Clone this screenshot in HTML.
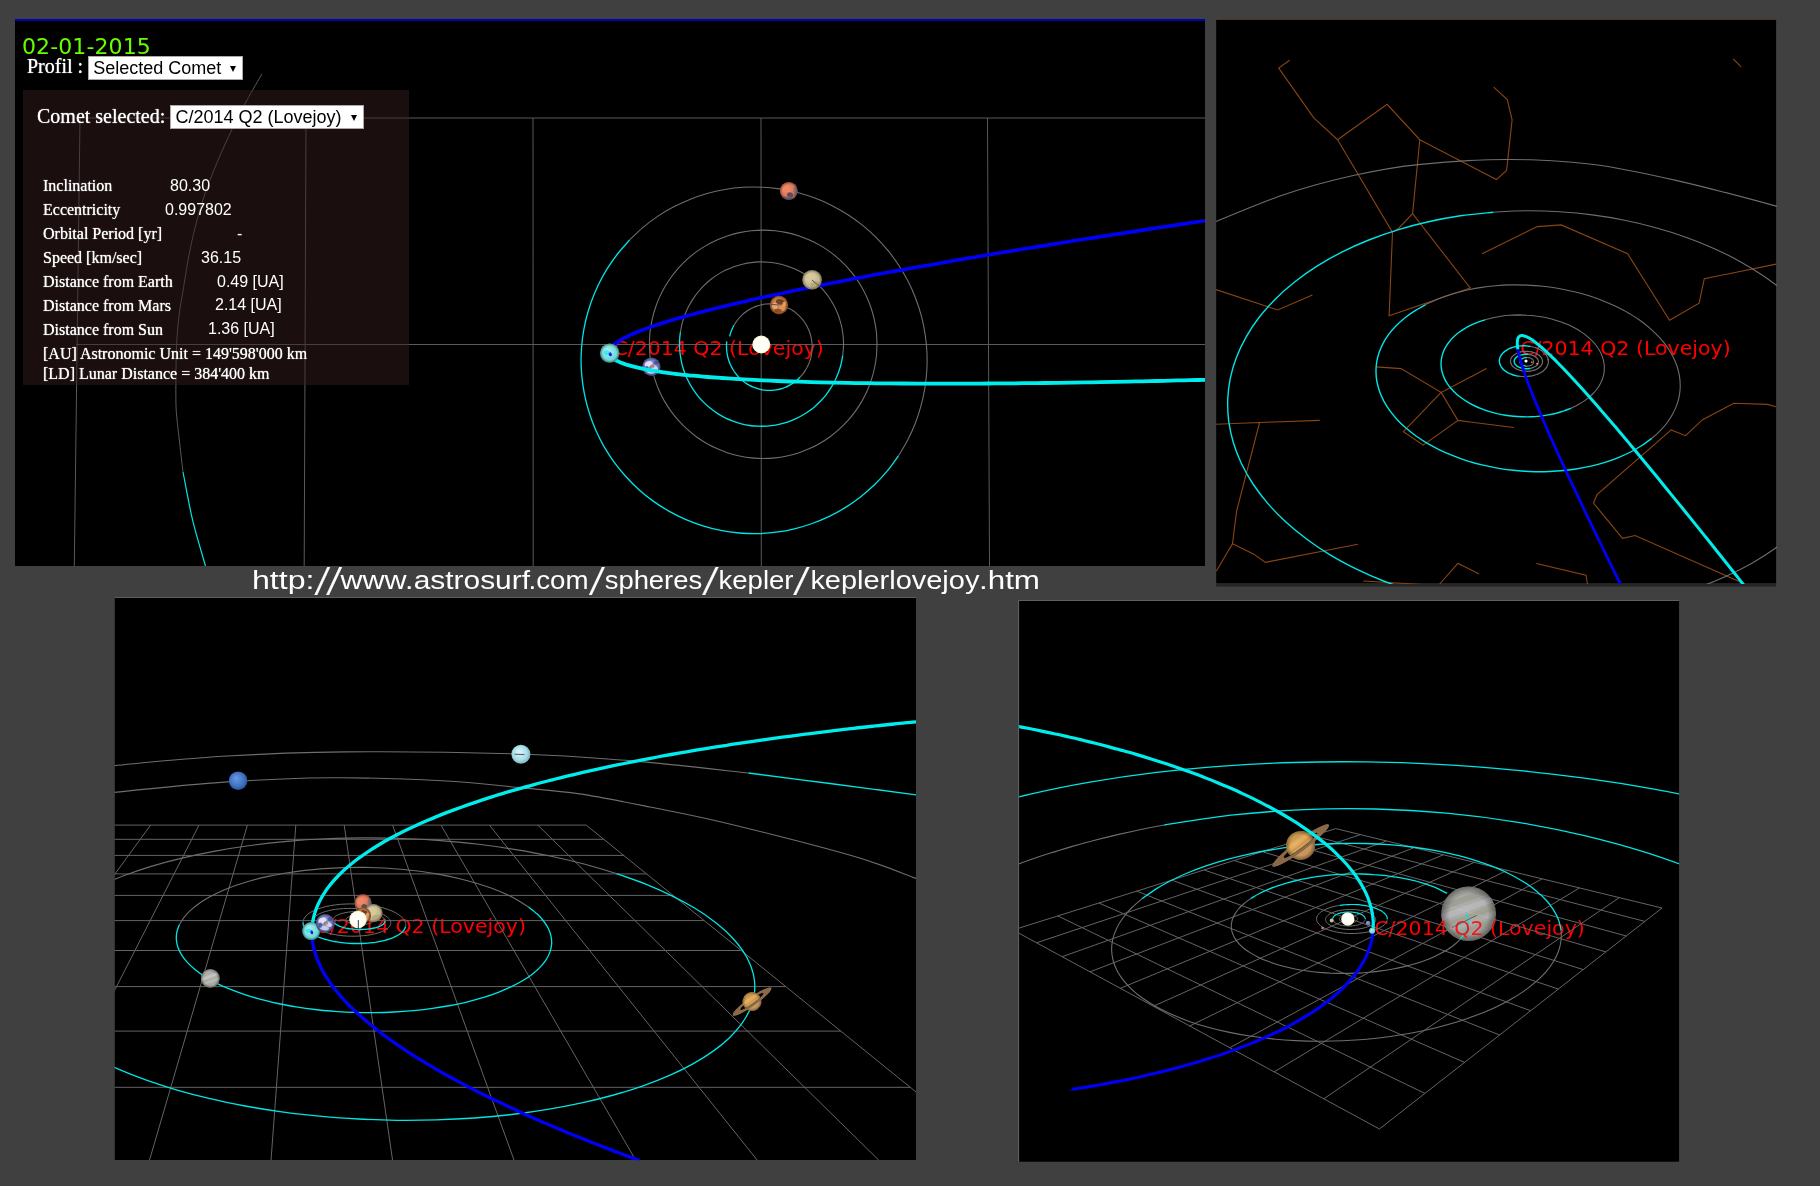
<!DOCTYPE html>
<html lang="en"><head><meta charset="utf-8"><title>Kepler - C/2014 Q2 (Lovejoy)</title>
<style>
html,body{margin:0;padding:0;background:#404040;}
body{width:1820px;height:1186px;position:relative;overflow:hidden;}
svg{position:absolute;left:0;top:0;will-change:transform;}
.t{position:absolute;white-space:nowrap;will-change:transform;}
.info{position:absolute;left:23px;top:90.3px;width:385.5px;height:295px;background:rgba(58,29,29,0.47);}
.sel{position:absolute;will-change:transform;background:#fff;border:1px solid #a9a9a9;box-sizing:border-box;}
.sel span{position:absolute;top:0;line-height:22px;font-family:'Liberation Sans',Arial,sans-serif;font-size:18px;color:#000;white-space:nowrap;}
.sel i{position:absolute;top:8.5px;width:0;height:0;border-left:3px solid transparent;border-right:3px solid transparent;border-top:6px solid #000;}
</style></head><body>
<svg width="1820" height="1186" viewBox="0 0 1820 1186">
<defs><radialGradient id="gShade" cx="0.5" cy="0.5" r="0.5"><stop offset="0.7" stop-color="#000" stop-opacity="0"/><stop offset="1" stop-color="#000" stop-opacity="0.35"/></radialGradient><radialGradient id="gSun" cx="0.5" cy="0.5" r="0.5" fx="0.5" fy="0.5"><stop offset="0" stop-color="#ffffff"/><stop offset="0.8" stop-color="#fffff2"/><stop offset="1" stop-color="#f0eecb"/></radialGradient><radialGradient id="gMerc" cx="0.5" cy="0.5" r="0.62" fx="0.38" fy="0.35"><stop offset="0" stop-color="#d89058"/><stop offset="0.7" stop-color="#c07038"/><stop offset="1" stop-color="#8a4820"/></radialGradient><radialGradient id="gVen" cx="0.5" cy="0.5" r="0.62" fx="0.38" fy="0.35"><stop offset="0" stop-color="#d6caa0"/><stop offset="0.7" stop-color="#c4b88c"/><stop offset="1" stop-color="#9a8e68"/></radialGradient><radialGradient id="gMars" cx="0.5" cy="0.5" r="0.62" fx="0.38" fy="0.35"><stop offset="0" stop-color="#ec8a66"/><stop offset="0.7" stop-color="#dc7456"/><stop offset="1" stop-color="#b85a44"/></radialGradient><radialGradient id="gEarth" cx="0.5" cy="0.5" r="0.62" fx="0.38" fy="0.35"><stop offset="0" stop-color="#9aa0d8"/><stop offset="0.7" stop-color="#6a72b8"/><stop offset="1" stop-color="#3a3e80"/></radialGradient><radialGradient id="gComet" cx="0.5" cy="0.5" r="0.62" fx="0.38" fy="0.35"><stop offset="0" stop-color="#b0f0f0"/><stop offset="0.7" stop-color="#6ad8d8"/><stop offset="1" stop-color="#3aa8a8"/></radialGradient><radialGradient id="gJup" cx="0.5" cy="0.5" r="0.62" fx="0.38" fy="0.35"><stop offset="0" stop-color="#bebeba"/><stop offset="0.7" stop-color="#b0b0ac"/><stop offset="1" stop-color="#8e8e8c"/></radialGradient><radialGradient id="gSat" cx="0.5" cy="0.5" r="0.62" fx="0.38" fy="0.35"><stop offset="0" stop-color="#e4b060"/><stop offset="0.7" stop-color="#d8a050"/><stop offset="1" stop-color="#b88444"/></radialGradient><radialGradient id="gUra" cx="0.5" cy="0.5" r="0.62" fx="0.38" fy="0.35"><stop offset="0" stop-color="#e0f8fc"/><stop offset="0.6" stop-color="#a8dce8"/><stop offset="1" stop-color="#5a98a8"/></radialGradient><radialGradient id="gNep" cx="0.5" cy="0.5" r="0.62" fx="0.38" fy="0.35"><stop offset="0" stop-color="#6a9ae0"/><stop offset="0.6" stop-color="#3f73c4"/><stop offset="1" stop-color="#20407a"/></radialGradient></defs>
<clipPath id="c1"><rect x="15" y="19" width="1190" height="547"/></clipPath>
<rect x="15" y="19" width="1190" height="547" fill="#000"/>
<rect x="15" y="19" width="1190" height="2" fill="#0000b4"/>
<g clip-path="url(#c1)">
<text x="613.4" y="354.7" textLength="210.5" lengthAdjust="spacingAndGlyphs" font-family="'DejaVu Sans', Verdana, sans-serif" font-size="19.8" fill="#ff0000">C/2014 Q2 (Lovejoy)</text>
<path d="M79,118 L1205,118 M76.5,344.5 L1205,344.5 M80,118 L74.3,566 M306,118 L304.2,566 M533,118 L533.2,566 M761,118 L761.3,566 M987.5,118 L989.5,566" fill="none" stroke="#5a5a5a" stroke-width="1" />
<path d="M262,74 C259.5,78.3 251.9,91 247,100 C242.1,109 237.8,117.3 232.6,128.1 C227.4,138.9 221.1,152.7 216,165 C210.9,177.3 206.4,188.9 202.2,202.2 C198,215.5 194.1,230.9 191,245 C187.9,259.1 185.8,274 183.7,286.5 C181.6,299 179.7,308.8 178.5,320 C177.3,331.2 176.7,340.6 176.3,353.9 C175.9,367.2 175.8,388.5 175.9,399.7 C176.1,410.9 176,408.8 177.2,420.9 C178.4,432.9 182,463.5 183,472" fill="none" stroke="#5a5a5a" stroke-width="1" />
<path d="M183,472 C184.6,479.9 188.8,504 192.5,519.7 C196.2,535.4 202.8,556.3 205.5,566 C208.2,575.7 208.4,576 209,578" fill="none" stroke="#00e5e5" stroke-width="1.2" />
<path d="M629.7,239.9 C631.9,237.8 638.4,231.4 643,227.4 C647.7,223.5 652.6,219.8 657.6,216.4 C662.7,213 667.9,209.9 673.3,207.1 C678.7,204.2 684.2,201.6 689.9,199.4 C695.5,197.1 701.3,195.1 707.2,193.5 C713,191.8 719,190.5 725,189.5 C731,188.4 737.1,187.7 743.2,187.3 C749.2,187 755.4,186.9 761.4,187.2 C767.5,187.4 773.6,188 779.6,188.9 C785.6,189.8 791.6,191 797.5,192.5 C803.4,194.1 809.2,195.9 814.9,198.1 C820.6,200.2 826.2,202.7 831.7,205.4 C837.1,208.1 842.4,211.2 847.6,214.5 C852.7,217.8 857.6,221.3 862.4,225.1 C867.1,229 871.7,233 876,237.3 C880.3,241.6 884.4,246.2 888.3,250.9 C892.1,255.6 895.7,260.6 899,265.7 C902.4,270.8 905.4,276.1 908.2,281.5 C911,287 913.5,292.6 915.6,298.2 C917.8,303.9 919.7,309.8 921.3,315.7 C922.8,321.5 924.1,327.5 925,333.6 C926,339.6 926.6,345.7 926.9,351.8 C927.2,357.9 927.2,364 926.8,370.1 C926.5,376.2 925.8,382.3 924.8,388.3 C923.9,394.3 922.5,400.3 920.9,406.1 C919.3,412 917.4,417.8 915.2,423.5 C913,429.2 910.4,434.8 907.6,440.2 C904.8,445.6 899.9,453.3 898.4,456" fill="none" stroke="#6e6e6e" stroke-width="1.1" />
<path d="M898.4,456 C896.5,458.4 891.3,466.1 887.3,470.9 C883.4,475.6 879.2,480.2 874.7,484.5 C870.3,488.8 865.6,492.9 860.8,496.7 C855.9,500.6 850.8,504.1 845.6,507.4 C840.3,510.7 834.9,513.7 829.3,516.4 C823.8,519 818,521.5 812.2,523.5 C806.4,525.6 800.4,527.4 794.4,528.8 C788.4,530.3 782.3,531.4 776.2,532.2 C770.1,533 763.9,533.4 757.7,533.6 C751.5,533.7 745.3,533.5 739.2,533 C733,532.4 726.9,531.6 720.8,530.4 C714.7,529.2 708.7,527.6 702.8,525.8 C696.9,524 691.1,521.8 685.4,519.4 C679.8,516.9 674.2,514.1 668.8,511.1 C663.5,508 658.2,504.7 653.2,501.1 C648.2,497.5 643.3,493.6 638.7,489.4 C634.1,485.3 629.7,480.9 625.6,476.3 C621.5,471.7 617.6,466.9 613.9,461.9 C610.3,456.9 607,451.6 603.9,446.3 C600.8,440.9 598,435.3 595.6,429.7 C593.1,424 590.9,418.2 589.1,412.3 C587.2,406.4 585.7,400.3 584.5,394.3 C583.2,388.2 582.4,382 581.8,375.9 C581.2,369.7 581,363.5 581.1,357.3 C581.2,351.1 581.7,344.9 582.4,338.8 C583.2,332.7 584.3,326.5 585.7,320.5 C587.1,314.5 588.9,308.5 590.9,302.7 C593,296.8 595.4,291.1 598,285.5 C600.7,279.9 603.7,274.5 606.9,269.2 C610.2,264 613.7,258.8 617.5,254 C621.3,249.1 627.6,242.3 629.7,239.9" fill="none" stroke="#00e5e5" stroke-width="1.3" />
<path d="M877,344.3 C876.9,346.3 876.8,352.3 876.4,356.2 C876,360.2 875.3,364.2 874.5,368 C873.7,371.9 872.7,375.8 871.4,379.6 C870.2,383.4 868.8,387.1 867.2,390.7 C865.5,394.4 863.7,398 861.8,401.4 C859.8,404.8 857.6,408.2 855.3,411.4 C852.9,414.6 850.4,417.8 847.8,420.7 C845.1,423.7 842.3,426.5 839.3,429.2 C836.4,431.8 833.3,434.4 830.1,436.7 C826.9,439 823.5,441.2 820.1,443.2 C816.7,445.2 813.1,447 809.5,448.6 C805.9,450.2 802.1,451.7 798.4,452.9 C794.6,454.1 790.7,455.2 786.9,456 C783,456.8 779,457.5 775.1,457.9 C771.2,458.3 767.2,458.5 763.2,458.5 C759.2,458.5 755.2,458.3 751.3,457.9 C747.4,457.5 743.4,456.8 739.5,456 C735.7,455.2 731.8,454.1 728,452.9 C724.3,451.7 720.5,450.2 716.9,448.6 C713.3,447 709.7,445.2 706.3,443.2 C702.9,441.2 699.5,439 696.3,436.7 C693.1,434.4 690,431.8 687.1,429.2 C684.1,426.5 681.3,423.7 678.6,420.7 C676,417.8 673.5,414.6 671.1,411.4 C668.8,408.2 666.6,404.8 664.6,401.4 C662.7,398 660.9,394.4 659.2,390.7 C657.6,387.1 656.2,383.4 655,379.6 C653.7,375.8 652.7,371.9 651.9,368 C651.1,364.2 650.4,360.2 650,356.2 C649.6,352.3 649.4,348.3 649.4,344.3 C649.4,340.3 649.6,336.3 650,332.4 C650.4,328.4 651.1,324.4 651.9,320.6 C652.7,316.7 653.7,312.8 655,309 C656.2,305.2 657.6,301.5 659.2,297.9 C660.9,294.2 662.7,290.6 664.6,287.2 C666.6,283.8 668.8,280.4 671.1,277.2 C673.5,274 676,270.8 678.6,267.9 C681.3,264.9 684.1,262.1 687.1,259.4 C690,256.8 693.1,254.2 696.3,251.9 C699.5,249.6 702.9,247.4 706.3,245.4 C709.7,243.4 713.3,241.6 716.9,240 C720.5,238.4 724.3,236.9 728,235.7 C731.8,234.5 735.7,233.4 739.5,232.6 C743.4,231.8 747.4,231.1 751.3,230.7 C755.2,230.3 759.2,230.1 763.2,230.1 C767.2,230.1 771.2,230.3 775.1,230.7 C779,231.1 783,231.8 786.9,232.6 C790.7,233.4 794.6,234.5 798.4,235.7 C802.1,236.9 805.9,238.4 809.5,240 C813.1,241.6 816.7,243.4 820.1,245.4 C823.5,247.4 826.9,249.6 830.1,251.9 C833.3,254.2 836.4,256.8 839.3,259.4 C842.3,262.1 845.1,264.9 847.8,267.9 C850.4,270.8 852.9,274 855.3,277.2 C857.6,280.4 859.8,283.8 861.8,287.2 C863.7,290.6 865.5,294.2 867.2,297.9 C868.8,301.5 870.2,305.2 871.4,309 C872.7,312.8 873.7,316.7 874.5,320.6 C875.3,324.4 876,328.4 876.4,332.4 C876.8,336.3 876.9,342.3 877,344.3" fill="none" stroke="#6e6e6e" stroke-width="1.1" />
<path d="M680.4,332.1 C680.7,330.6 681.4,326.3 682.1,323.4 C682.9,320.5 683.8,317.7 684.8,314.9 C685.9,312.2 687.1,309.4 688.4,306.8 C689.8,304.2 691.3,301.6 692.9,299.1 C694.5,296.6 696.2,294.2 698.1,292 C700,289.7 702,287.5 704.1,285.4 C706.2,283.3 708.4,281.4 710.7,279.5 C713.1,277.7 715.5,276 718,274.4 C720.5,272.9 723.1,271.4 725.7,270.1 C728.4,268.8 731.1,267.7 733.9,266.7 C736.7,265.7 739.5,264.9 742.4,264.2 C745.3,263.5 748.2,262.9 751.1,262.6 C754,262.2 757,262 759.9,261.9 C762.9,261.9 765.9,262 768.8,262.2 C771.7,262.5 774.7,262.9 777.6,263.5 C780.5,264.1 783.3,264.8 786.1,265.7 C789,266.6 791.7,267.6 794.4,268.8 C797.1,270 799.8,271.4 802.3,272.8 C804.9,274.3 807.4,275.9 809.8,277.7 C812.2,279.4 814.5,281.3 816.6,283.3 C818.8,285.3 820.9,287.4 822.9,289.6 C824.8,291.8 826.7,294.1 828.4,296.5 C830.1,299 831.7,301.5 833.1,304 C834.5,306.6 835.9,309.3 837,312 C838.2,314.7 839.2,317.5 840,320.4 C840.9,323.2 841.6,326.1 842.1,329 C842.6,331.9 843,334.9 843.3,337.8 C843.5,340.8 843.6,343.7 843.5,346.7 C843.4,349.6 842.8,354.1 842.7,355.5" fill="none" stroke="#6e6e6e" stroke-width="1.1" />
<path d="M842.7,355.5 C842.4,357 841.8,361.2 841.1,364 C840.4,366.8 839.5,369.6 838.5,372.3 C837.6,374.9 836.4,377.6 835.2,380.2 C833.9,382.8 832.5,385.3 831,387.7 C829.5,390.2 827.8,392.5 826.1,394.8 C824.3,397 822.4,399.2 820.4,401.3 C818.4,403.3 816.3,405.3 814.1,407.2 C811.9,409 809.6,410.7 807.2,412.3 C804.9,413.9 802.4,415.4 799.8,416.8 C797.3,418.1 794.7,419.3 792,420.4 C789.4,421.5 786.7,422.4 783.9,423.2 C781.1,424 778.3,424.6 775.5,425.1 C772.7,425.6 769.8,425.9 767,426.1 C764.1,426.3 761.2,426.3 758.4,426.2 C755.5,426.1 752.6,425.9 749.8,425.5 C747,425.1 744.1,424.5 741.4,423.8 C738.6,423.1 735.8,422.2 733.1,421.2 C730.5,420.2 727.8,419.1 725.2,417.8 C722.7,416.6 720.2,415.1 717.7,413.6 C715.3,412.1 713,410.4 710.7,408.6 C708.5,406.9 706.3,405 704.3,402.9 C702.2,400.9 700.2,398.8 698.4,396.6 C696.6,394.4 694.9,392.1 693.3,389.7 C691.7,387.3 690.2,384.8 688.9,382.3 C687.6,379.7 686.4,377.1 685.3,374.4 C684.2,371.8 683.3,369 682.5,366.3 C681.8,363.5 681.1,360.7 680.7,357.9 C680.2,355 679.8,352.2 679.7,349.3 C679.5,346.4 679.5,343.5 679.6,340.7 C679.7,337.8 680.2,333.5 680.4,332.1" fill="none" stroke="#00e5e5" stroke-width="1.3" />
<path d="M799.9,377.3 C800.4,376.7 802,375.1 802.9,373.9 C803.8,372.7 804.7,371.4 805.5,370.1 C806.3,368.9 807.1,367.5 807.7,366.1 C808.4,364.8 809,363.4 809.5,361.9 C810,360.5 810.5,359 810.9,357.5 C811.2,356.1 811.5,354.5 811.7,353 C811.9,351.5 812.1,350 812.1,348.5 C812.2,346.9 812.2,345.4 812.1,343.9 C811.9,342.4 811.8,340.8 811.5,339.3 C811.2,337.8 810.9,336.3 810.5,334.9 C810.1,333.4 809.6,332 809,330.5 C808.4,329.1 807.8,327.7 807.1,326.4 C806.4,325.1 805.6,323.8 804.8,322.5 C803.9,321.2 803,320 802,318.9 C801.1,317.7 800,316.6 799,315.6 C797.9,314.5 796.7,313.5 795.6,312.6 C794.4,311.7 793.1,310.8 791.9,310 C790.6,309.3 789.3,308.5 787.9,307.9 C786.6,307.2 785.2,306.7 783.8,306.2 C782.4,305.7 781,305.3 779.5,304.9 C778.1,304.6 776.6,304.3 775.1,304.1 C773.7,304 772.2,303.9 770.7,303.9 C769.2,303.8 767.7,303.9 766.2,304 C764.8,304.2 763.3,304.4 761.8,304.7 C760.4,305 758.9,305.4 757.5,305.9 C756.1,306.3 754.7,306.8 753.4,307.5 C752,308.1 750.7,308.8 749.4,309.5 C748.1,310.3 746.9,311.1 745.7,312 C744.5,312.9 743.3,313.8 742.2,314.8 C741.1,315.8 740.1,316.9 739.1,318 C738.1,319.2 737.2,320.3 736.3,321.6 C735.5,322.8 734.3,324.7 733.9,325.4" fill="none" stroke="#6e6e6e" stroke-width="1.1" />
<path d="M733.9,325.4 C733.8,325.6 733.4,326.2 733.2,326.7 C733,327.1 732.8,327.6 732.6,328 C732.3,328.5 732.1,328.9 732,329.4 C731.8,329.8 731.6,330.3 731.4,330.7 C731.2,331.2 731,331.7 730.9,332.1 C730.7,332.6 730.6,333.1 730.4,333.5 C730.3,334 730.1,334.5 730,335 C729.9,335.4 729.7,336.2 729.6,336.4" fill="none" stroke="#00e5e5" stroke-width="1.3" />
<path d="M799.9,377.3 C799.4,377.8 797.7,379.5 796.6,380.5 C795.4,381.5 794.2,382.4 792.9,383.3 C791.6,384.1 790.3,384.9 788.9,385.6 C787.6,386.3 786.2,387 784.8,387.5 C783.3,388.1 781.9,388.6 780.4,389 C778.9,389.4 777.4,389.7 775.9,389.9 C774.4,390.2 772.9,390.3 771.3,390.4 C769.8,390.4 768.3,390.4 766.7,390.3 C765.2,390.2 763.7,390 762.2,389.8 C760.6,389.5 759.1,389.1 757.7,388.7 C756.2,388.3 754.7,387.8 753.3,387.2 C751.9,386.6 750.5,385.9 749.1,385.1 C747.8,384.4 746.4,383.6 745.2,382.7 C743.9,381.8 742.7,380.8 741.5,379.8 C740.3,378.7 739.2,377.6 738.1,376.5 C737.1,375.3 736.1,374.1 735.2,372.8 C734.2,371.6 733.4,370.2 732.6,368.9 C731.8,367.5 731.1,366.1 730.4,364.6 C729.8,363.2 729.2,361.7 728.7,360.2 C728.2,358.7 727.8,357.1 727.5,355.6 C727.1,354 726.9,352.4 726.7,350.8 C726.6,349.3 726.5,347.7 726.5,346.1 C726.5,344.5 726.7,342.1 726.8,341.3" fill="none" stroke="#00e5e5" stroke-width="1.3" />
<g transform="translate(651.4,366.8)"><clipPath id="pc1"><circle r="9.2"/></clipPath><circle r="9.2" fill="url(#gEarth)"/><g clip-path="url(#pc1)"><ellipse cx="-2.8" cy="-2.8" rx="4.1" ry="2.8" transform="rotate(-20 -2.8 -2.8)" fill="#f4f4ff" opacity="0.8"/><ellipse cx="3.2" cy="0.9" rx="3.7" ry="2.3" transform="rotate(30 3.2 0.9)" fill="#f0f0ff" opacity="0.75"/><ellipse cx="-0.9" cy="4.6" rx="4.6" ry="2.3" transform="rotate(10 -0.9 4.6)" fill="#e8e8f8" opacity="0.7"/><ellipse cx="0.9" cy="-0.5" rx="2.3" ry="1.8" transform="rotate(0 0.9 -0.5)" fill="#8a5a3a" opacity="0.6"/><ellipse cx="-4.6" cy="1.8" rx="1.8" ry="2.8" transform="rotate(0 -4.6 1.8)" fill="#2a3a8a" opacity="0.6"/><ellipse cx="4.6" cy="-4.1" rx="2.3" ry="1.8" transform="rotate(0 4.6 -4.1)" fill="#2a3a8a" opacity="0.6"/></g><circle r="9.2" fill="url(#gShade)"/></g>
<path d="M609.5,352.4 C609.5,352.5 609.5,352.7 609.5,352.9 C609.6,353.1 609.6,353.2 609.6,353.4 C609.7,353.6 609.7,353.7 609.7,353.9 C609.8,354.1 609.9,354.2 609.9,354.4 C610,354.6 610.1,354.8 610.2,355 C610.3,355.1 610.4,355.3 610.5,355.5 C610.6,355.7 610.8,355.9 610.9,356.2 C611.1,356.4 611.3,356.6 611.5,356.8 C611.7,357.1 612,357.3 612.3,357.6 C612.6,357.9 612.9,358.2 613.3,358.5 C613.7,358.8 614.2,359.2 614.8,359.6 C615.4,359.9 616.1,360.4 617,360.8 C618,361.3 618.9,361.8 620.5,362.5 C622.1,363.1 623.5,363.8 626.4,364.7 C629.3,365.5 633.7,366.8 637.9,367.7 C642.1,368.7 647,369.7 651.6,370.5 C656.2,371.3 660.9,371.9 665.5,372.6 C670.1,373.2 674.8,373.8 679.4,374.3 C684,374.8 688.7,375.3 693.3,375.7 C698,376.2 702.6,376.6 707.3,377 C711.9,377.3 716.6,377.7 721.3,378 C725.9,378.3 730.6,378.6 735.2,378.9 C739.9,379.2 744.6,379.4 749.2,379.7 C753.9,379.9 758.6,380.2 763.2,380.4 C767.9,380.6 772.6,380.8 777.3,381 C781.9,381.1 786.6,381.3 791.3,381.5 C796,381.6 800.6,381.8 805.3,381.9 C810,382.1 814.7,382.2 819.4,382.3 C824,382.4 828.7,382.5 833.4,382.6 C838.1,382.7 842.8,382.8 847.5,382.9 C852.2,383 856.8,383.1 861.5,383.1 C866.2,383.2 870.9,383.2 875.6,383.3 C880.3,383.4 885,383.4 889.6,383.4 C894.3,383.5 899,383.5 903.7,383.5 C908.3,383.6 913,383.6 917.7,383.6 C922.4,383.6 927,383.6 931.7,383.6 C936.4,383.7 941.1,383.7 945.8,383.7 C950.4,383.6 955.1,383.6 959.8,383.6 C964.4,383.6 969.1,383.6 973.8,383.6 C978.5,383.6 983.1,383.5 987.8,383.5 C992.5,383.5 997.2,383.4 1001.9,383.4 C1006.6,383.4 1011.2,383.3 1015.9,383.3 C1020.6,383.2 1025.3,383.2 1030,383.1 C1034.7,383.1 1039.3,383 1044,383 C1048.7,382.9 1053.4,382.8 1058.1,382.8 C1062.7,382.7 1067.4,382.6 1072.1,382.6 C1076.8,382.5 1081.5,382.4 1086.2,382.3 C1090.8,382.3 1095.5,382.2 1100.2,382.1 C1104.9,382 1109.6,381.9 1114.2,381.8 C1118.9,381.7 1123.6,381.7 1128.2,381.6 C1132.9,381.5 1137.6,381.4 1142.3,381.3 C1147,381.2 1151.6,381.1 1156.3,381 C1161,380.9 1165.7,380.8 1170.4,380.6 C1175.1,380.5 1179.7,380.4 1184.4,380.3 C1189.1,380.2 1194.3,380.1 1198.5,380 C1202.6,379.9 1207.6,379.7 1209.4,379.7" fill="none" stroke="#00eded" stroke-width="3.8" />
<path d="M1210.2,220 C1207.8,220.3 1200.9,221.3 1196.3,222 C1191.6,222.7 1187,223.4 1182.3,224.1 C1177.7,224.8 1173.1,225.5 1168.4,226.2 C1163.8,226.9 1159.2,227.6 1154.6,228.3 C1150,229 1145.3,229.7 1140.7,230.4 C1136.1,231.1 1131.5,231.9 1126.8,232.6 C1122.2,233.3 1117.6,234 1112.9,234.7 C1108.3,235.4 1103.7,236.2 1099,236.9 C1094.4,237.6 1089.8,238.3 1085.2,239.1 C1080.6,239.8 1075.9,240.5 1071.3,241.3 C1066.7,242 1062.1,242.7 1057.5,243.5 C1052.9,244.2 1048.2,245 1043.6,245.7 C1039,246.5 1034.4,247.2 1029.8,248 C1025.2,248.7 1020.6,249.5 1016,250.2 C1011.3,251 1006.7,251.8 1002.1,252.5 C997.5,253.3 992.9,254.1 988.3,254.8 C983.7,255.6 979,256.4 974.4,257.2 C969.8,258 965.2,258.8 960.6,259.6 C956,260.3 951.3,261.1 946.7,261.9 C942.1,262.7 937.5,263.6 932.9,264.4 C928.3,265.2 923.7,266 919.1,266.8 C914.5,267.6 909.9,268.4 905.3,269.3 C900.7,270.1 896,270.9 891.4,271.8 C886.8,272.6 882.2,273.5 877.6,274.3 C873,275.2 868.4,276 863.8,276.9 C859.2,277.8 854.6,278.6 850.1,279.5 C845.5,280.4 840.9,281.3 836.3,282.2 C831.7,283.1 827.1,284 822.5,284.9 C817.9,285.8 813.3,286.7 808.7,287.7 C804.1,288.6 799.6,289.5 795,290.5 C790.4,291.4 785.8,292.4 781.2,293.4 C776.7,294.3 772.1,295.3 767.5,296.3 C762.9,297.3 758.4,298.3 753.8,299.3 C749.3,300.4 744.7,301.4 740.2,302.5 C735.6,303.5 731,304.6 726.5,305.7 C721.9,306.8 717.4,307.9 712.9,309 C708.3,310.2 703.8,311.3 699.3,312.5 C694.8,313.7 690.3,314.9 685.8,316.2 C681.3,317.4 676.8,318.7 672.3,320 C667.8,321.4 663.3,322.8 658.9,324.2 C654.5,325.7 650,327.1 645.7,328.8 C641.3,330.4 636.4,332.3 632.6,334 C628.9,335.6 625.5,337.3 623,338.6 C620.6,339.9 619.3,340.8 618,341.6 C616.7,342.5 615.9,343.1 615.1,343.7 C614.3,344.3 613.8,344.8 613.3,345.3 C612.8,345.8 612.4,346.2 612.1,346.6 C611.7,346.9 611.5,347.3 611.3,347.6 C611,347.9 610.8,348.2 610.7,348.5 C610.5,348.7 610.4,349 610.3,349.2 C610.1,349.5 610,349.7 610,349.9 C609.9,350.1 609.8,350.3 609.8,350.5 C609.7,350.7 609.6,350.9 609.6,351.1 C609.6,351.3 609.5,351.4 609.5,351.6 C609.5,351.8 609.5,352 609.5,352.1 C609.5,352.3 609.5,352.4 609.5,352.4" fill="none" stroke="#0000f6" stroke-width="3.6" />
</g>
<clipPath id="c2"><rect x="1216.2" y="19.4" width="559.9" height="564.1"/></clipPath>
<rect x="1216.2" y="19.4" width="559.9" height="564.1" fill="#000"/>
<rect x="1216.2" y="19" width="559.9" height="1" fill="#5a3418"/>
<rect x="1216.2" y="583.4" width="559.9" height="3.2" fill="#262626"/>
<g clip-path="url(#c2)">
<text x="1520.2" y="354.6" textLength="210.5" lengthAdjust="spacingAndGlyphs" font-family="'DejaVu Sans', Verdana, sans-serif" font-size="19.8" fill="#ff0000">C/2014 Q2 (Lovejoy)</text>
<path d="M1289.6,60.3 L1278.7,68.1 L1313.8,117.9 L1337.6,139.7 L1387.1,104.3 L1419.8,139.7 L1496.4,179.6 L1506.6,170.4 L1512.1,119.9 L1507.3,99.5 L1493.7,87.2 M1337.6,139.7 L1392.5,232.4 L1389.1,315.8 L1470.2,287.9 L1412.6,213.6 L1419.8,139.7 M1412.6,213.6 L1399,228 L1392.5,232.4 M1482.1,253.8 L1537.3,226.6 L1561.2,224.9 L1627.6,253.8 L1669.5,320.2 L1699.1,303.2 L1704.3,278.7 L1776.1,264.1 M1733.2,58.9 L1741.1,66.8 M1216,289.6 L1277.7,310 L1312.4,295 M1376.1,366.9 L1401,368.6 L1441.2,392.4 L1486.5,368.6 M1441.2,392.4 L1403.4,431.6 L1423.2,445.2 L1457.9,420.4 L1441.2,392.4 M1457.9,420.4 L1513.8,427.5 M1216.2,424.3 L1259.6,422.5 L1319.8,420.4 M1259.6,422.5 L1236.6,511 L1232.5,543.8 L1216.2,571.2 M1232.5,543.8 L1253.4,553.9 L1265.4,562.4 L1357.8,544.3 M1363.2,581 L1422.5,584.5 M1439.3,584.5 L1457.9,563.3 L1479.1,573.9 M1776.1,406.7 L1767.3,404.4 L1733.9,403.3 L1702.6,419.7 L1685.5,435.7 L1671.2,429.9 L1597,494.7 L1593.5,503.2 L1622.5,538.3 L1635.1,535.5 L1741.7,582.6 M1536.3,563.5 L1586,575.1 L1587.7,585" fill="none" stroke="#8b4513" stroke-width="1.1" />
<path d="M1190,234 C1194.3,231.9 1200.1,228.1 1216,221.5 C1231.9,214.9 1262.3,201.9 1285.2,194.2 C1308.1,186.5 1331.2,180.4 1353.3,175.5 C1375.4,170.6 1392.5,167.3 1418.1,164.6 C1443.6,161.9 1477.6,159.6 1506.6,159.5 C1535.5,159.4 1563.4,160.7 1591.8,164.2 C1620.2,167.7 1646.3,173.6 1677,180.6 C1707.7,187.6 1755.6,200.5 1776.1,206.1 C1796.6,211.7 1796,212.7 1800,214" fill="none" stroke="#6e6e6e" stroke-width="1.1" />
<path d="M1493.3,212.2 C1498.8,211.9 1515.2,210.9 1526.2,210.8 C1537.2,210.7 1548.3,211 1559.3,211.7 C1570.3,212.4 1581.3,213.4 1592.2,214.9 C1603.1,216.3 1613.9,218.1 1624.5,220.2 C1635.1,222.3 1645.6,224.8 1655.9,227.7 C1666.1,230.5 1676.2,233.7 1685.9,237.2 C1695.7,240.7 1705.2,244.6 1714.4,248.7 C1723.5,252.8 1732.4,257.3 1740.8,262 C1749.3,266.7 1757.4,271.8 1765.1,277 C1772.7,282.3 1780,287.8 1786.8,293.5 C1793.5,299.2 1799.9,305.2 1805.7,311.3 C1811.5,317.5 1816.9,323.8 1821.7,330.3 C1826.5,336.7 1830.7,343.4 1834.5,350.1 C1838.2,356.8 1841.4,363.7 1844,370.6 C1846.6,377.6 1848.6,384.6 1850.1,391.6 C1851.5,398.7 1852.4,405.8 1852.7,412.8 C1853,419.9 1852.7,427 1851.8,434 C1850.9,441 1849.4,448.1 1847.4,455 C1845.4,461.8 1842.7,468.7 1839.6,475.4 C1836.4,482.1 1832.6,488.7 1828.4,495.1 C1824.1,501.5 1819.3,507.8 1813.9,513.9 C1808.6,520 1802.8,525.9 1796.4,531.5 C1790.1,537.2 1783.3,542.6 1776.1,547.8 C1768.8,553 1761.1,557.9 1753.1,562.5 C1745,567.2 1736.5,571.5 1727.7,575.6 C1718.8,579.6 1709.6,583.4 1700.2,586.8 C1690.7,590.2 1680.9,593.3 1670.9,596 C1660.8,598.7 1645.2,602 1640.1,603.2" fill="none" stroke="#6e6e6e" stroke-width="1.1" />
<path d="M1478.6,606.2 C1473.2,605.2 1456.8,602.5 1446.1,600.1 C1435.5,597.7 1424.9,595 1414.7,591.9 C1404.5,588.8 1394.4,585.3 1384.7,581.5 C1375,577.8 1365.6,573.6 1356.6,569.2 C1347.5,564.8 1338.8,560.1 1330.5,555.1 C1322.2,550.1 1314.3,544.9 1306.9,539.3 C1299.4,533.8 1292.4,528.1 1285.9,522.1 C1279.4,516.1 1273.4,509.9 1267.9,503.6 C1262.4,497.2 1257.4,490.6 1253,484 C1248.6,477.3 1244.7,470.4 1241.4,463.5 C1238.2,456.6 1235.4,449.6 1233.3,442.5 C1231.2,435.4 1229.7,428.2 1228.7,421.1 C1227.8,413.9 1227.5,406.7 1227.7,399.6 C1228,392.4 1228.9,385.3 1230.3,378.2 C1231.8,371.1 1233.8,364.1 1236.5,357.2 C1239.1,350.3 1242.4,343.5 1246.2,336.8 C1249.9,330.2 1254.3,323.6 1259.2,317.3 C1264.1,311 1269.6,304.8 1275.5,298.9 C1281.5,292.9 1287.9,287.2 1294.9,281.7 C1301.8,276.3 1309.2,271 1317,266.1 C1324.9,261.1 1333.1,256.4 1341.8,252.1 C1350.4,247.7 1359.5,243.7 1368.8,240 C1378.2,236.2 1387.9,232.8 1397.8,229.8 C1407.8,226.7 1418,224 1428.5,221.7 C1438.9,219.4 1449.6,217.4 1460.4,215.8 C1471.2,214.2 1487.8,212.8 1493.3,212.2" fill="none" stroke="#00e5e5" stroke-width="1.4" />
<path d="M1425.6,304.6 C1427.6,303.7 1433.6,300.8 1437.9,299 C1442.1,297.3 1446.6,295.7 1451.2,294.3 C1455.8,292.9 1460.5,291.6 1465.3,290.5 C1470.1,289.4 1475.1,288.4 1480.1,287.6 C1485.2,286.8 1490.3,286.2 1495.5,285.8 C1500.7,285.3 1505.9,285 1511.2,284.9 C1516.5,284.8 1521.8,284.9 1527.1,285.1 C1532.4,285.3 1537.7,285.7 1543,286.3 C1548.3,286.9 1553.6,287.6 1558.8,288.5 C1564,289.4 1569.1,290.5 1574.2,291.7 C1579.2,292.9 1584.2,294.3 1589.1,295.8 C1593.9,297.3 1598.7,299 1603.3,300.9 C1607.9,302.7 1612.4,304.7 1616.7,306.7 C1621,308.8 1625.2,311.1 1629.2,313.4 C1633.1,315.8 1636.9,318.2 1640.5,320.8 C1644.1,323.4 1647.4,326.1 1650.6,328.8 C1653.7,331.6 1656.7,334.4 1659.4,337.4 C1662,340.3 1664.5,343.3 1666.7,346.4 C1668.9,349.4 1670.8,352.6 1672.5,355.7 C1674.1,358.9 1675.6,362.1 1676.7,365.3 C1677.8,368.6 1678.7,371.8 1679.3,375.1 C1679.9,378.3 1680.2,381.6 1680.2,384.9 C1680.3,388.1 1680,391.4 1679.5,394.6 C1679,397.8 1678.2,401 1677.1,404.1 C1676,407.2 1674.7,410.3 1673.1,413.3 C1671.5,416.4 1669.6,419.3 1667.5,422.2 C1665.4,425.1 1663,427.9 1660.3,430.6 C1657.7,433.3 1653.2,437.1 1651.8,438.4" fill="none" stroke="#6e6e6e" stroke-width="1.1" />
<path d="M1651.8,438.4 C1650.1,439.6 1645.3,443.3 1641.8,445.5 C1638.3,447.8 1634.5,450 1630.6,452 C1626.7,454 1622.6,455.8 1618.3,457.6 C1614.1,459.3 1609.6,460.9 1605,462.3 C1600.4,463.7 1595.7,465 1590.9,466.1 C1586.1,467.2 1581.1,468.2 1576.1,469 C1571,469.8 1565.9,470.4 1560.7,470.8 C1555.5,471.3 1550.3,471.6 1545,471.7 C1539.7,471.8 1534.4,471.7 1529.1,471.5 C1523.8,471.3 1518.5,470.9 1513.2,470.3 C1507.9,469.7 1502.6,469 1497.4,468.1 C1492.2,467.2 1487.1,466.1 1482,464.9 C1477,463.7 1472,462.3 1467.1,460.8 C1462.3,459.3 1457.5,457.6 1452.9,455.7 C1448.3,453.9 1443.8,451.9 1439.5,449.9 C1435.2,447.8 1431,445.5 1427,443.2 C1423.1,440.8 1419.3,438.4 1415.7,435.8 C1412.1,433.2 1408.8,430.5 1405.6,427.8 C1402.5,425 1399.5,422.2 1396.8,419.2 C1394.2,416.3 1391.7,413.3 1389.5,410.2 C1387.3,407.2 1385.4,404 1383.7,400.9 C1382.1,397.7 1380.6,394.5 1379.5,391.3 C1378.4,388 1377.5,384.8 1376.9,381.5 C1376.3,378.3 1376,375 1376,371.7 C1375.9,368.5 1376.2,365.2 1376.7,362 C1377.2,358.8 1378,355.6 1379.1,352.5 C1380.2,349.4 1381.5,346.3 1383.1,343.3 C1384.7,340.2 1386.6,337.3 1388.7,334.4 C1390.8,331.5 1393.2,328.7 1395.9,326 C1398.5,323.3 1401.4,320.7 1404.4,318.2 C1407.5,315.7 1410.9,313.3 1414.4,311.1 C1417.9,308.8 1423.7,305.7 1425.6,304.6" fill="none" stroke="#00e5e5" stroke-width="1.4" />
<path d="M1485,319.8 C1486.3,319.4 1490.2,318.3 1492.9,317.7 C1495.6,317.1 1498.4,316.6 1501.2,316.2 C1504,315.8 1506.8,315.5 1509.7,315.3 C1512.5,315.1 1515.4,315 1518.3,314.9 C1521.2,314.9 1524.1,315 1527,315.2 C1529.9,315.3 1532.8,315.6 1535.7,316 C1538.5,316.3 1541.4,316.8 1544.2,317.3 C1547,317.9 1549.7,318.5 1552.4,319.2 C1555.1,320 1557.8,320.8 1560.4,321.7 C1562.9,322.6 1565.4,323.6 1567.8,324.6 C1570.3,325.7 1572.6,326.8 1574.8,328 C1577.1,329.2 1579.2,330.5 1581.2,331.9 C1583.2,333.2 1585.2,334.6 1586.9,336.1 C1588.7,337.6 1590.4,339.1 1591.9,340.7 C1593.5,342.3 1594.9,343.9 1596.2,345.5 C1597.4,347.2 1598.6,348.9 1599.5,350.6 C1600.5,352.4 1601.4,354.1 1602,355.9 C1602.7,357.7 1603.3,359.5 1603.6,361.3 C1604,363.1 1604.3,364.9 1604.3,366.7 C1604.4,368.5 1604.3,370.3 1604.1,372.1 C1603.9,373.9 1603.5,375.7 1602.9,377.5 C1602.4,379.2 1601.7,381 1600.8,382.7 C1600,384.4 1599,386.1 1597.9,387.7 C1596.8,389.3 1595.5,390.9 1594.1,392.5 C1592.7,394 1591.1,395.5 1589.4,396.9 C1587.8,398.4 1586,399.8 1584.1,401.1 C1582.2,402.4 1580.1,403.6 1578,404.8 C1575.9,406 1572.4,407.5 1571.3,408.1" fill="none" stroke="#6e6e6e" stroke-width="1.1" />
<path d="M1571.3,408.1 C1570.1,408.5 1566.5,410 1564,410.9 C1561.5,411.7 1559,412.5 1556.3,413.2 C1553.7,413.8 1551,414.4 1548.2,414.9 C1545.5,415.4 1542.7,415.8 1539.8,416.1 C1537,416.4 1534.1,416.7 1531.3,416.8 C1528.4,416.9 1525.5,416.9 1522.6,416.8 C1519.7,416.7 1516.8,416.6 1513.9,416.3 C1511,416 1508.2,415.7 1505.3,415.2 C1502.5,414.8 1499.7,414.2 1497,413.6 C1494.2,412.9 1491.5,412.2 1488.9,411.4 C1486.3,410.6 1483.7,409.7 1481.2,408.7 C1478.7,407.7 1476.3,406.6 1473.9,405.5 C1471.6,404.4 1469.4,403.2 1467.3,401.9 C1465.1,400.6 1463.1,399.2 1461.2,397.8 C1459.3,396.4 1457.5,395 1455.9,393.4 C1454.2,391.9 1452.7,390.3 1451.3,388.7 C1449.9,387.1 1448.6,385.4 1447.5,383.8 C1446.3,382.1 1445.3,380.3 1444.5,378.6 C1443.7,376.8 1443,375.1 1442.5,373.3 C1441.9,371.5 1441.5,369.7 1441.3,367.9 C1441.1,366.1 1441,364.3 1441.1,362.5 C1441.1,360.6 1441.4,358.8 1441.8,357.1 C1442.1,355.3 1442.7,353.5 1443.4,351.8 C1444.1,350.1 1444.9,348.3 1445.9,346.7 C1446.9,345 1448,343.3 1449.3,341.8 C1450.5,340.2 1451.9,338.6 1453.5,337.1 C1455,335.6 1456.7,334.2 1458.4,332.8 C1460.2,331.5 1462.1,330.1 1464.2,328.9 C1466.2,327.7 1468.3,326.5 1470.5,325.4 C1472.8,324.3 1475.1,323.3 1477.5,322.3 C1479.9,321.4 1483.7,320.2 1485,319.8" fill="none" stroke="#00e5e5" stroke-width="1.4" />
<path d="M1530.5,346.4 C1530.9,346.5 1532.1,346.8 1532.9,347 C1533.7,347.2 1534.5,347.4 1535.3,347.7 C1536,347.9 1536.8,348.2 1537.5,348.5 C1538.2,348.8 1538.9,349.2 1539.6,349.5 C1540.2,349.9 1540.9,350.3 1541.5,350.6 C1542.1,351 1542.6,351.5 1543.2,351.9 C1543.7,352.3 1544.2,352.8 1544.6,353.2 C1545.1,353.7 1545.5,354.2 1545.9,354.7 C1546.3,355.1 1546.6,355.6 1546.9,356.2 C1547.2,356.7 1547.5,357.2 1547.7,357.7 C1547.9,358.2 1548,358.8 1548.2,359.3 C1548.3,359.9 1548.4,360.4 1548.4,360.9 C1548.4,361.5 1548.4,362 1548.3,362.6 C1548.3,363.1 1548.2,363.6 1548,364.2 C1547.9,364.7 1547.7,365.2 1547.4,365.7 C1547.2,366.2 1546.9,366.8 1546.6,367.3 C1546.3,367.8 1545.9,368.2 1545.5,368.7 C1545.1,369.2 1544.6,369.6 1544.1,370.1 C1543.7,370.5 1543.1,370.9 1542.6,371.4 C1542,371.8 1541.4,372.2 1540.8,372.5 C1540.2,372.9 1539.5,373.2 1538.9,373.6 C1538.2,373.9 1537.5,374.2 1536.7,374.5 C1536,374.7 1535.3,375 1534.5,375.2 C1533.7,375.4 1532.9,375.6 1532.1,375.8 C1531.3,376 1530.5,376.1 1529.6,376.2 C1528.8,376.4 1527.9,376.4 1527.1,376.5 C1526.2,376.6 1525.4,376.6 1524.5,376.6 C1523.7,376.6 1522.8,376.6 1521.9,376.5 C1521.1,376.5 1519.8,376.3 1519.4,376.3" fill="none" stroke="#6e6e6e" stroke-width="1.2" />
<path d="M1519.4,376.3 C1519,376.2 1517.7,376 1516.8,375.9 C1516,375.7 1515.2,375.5 1514.3,375.3 C1513.5,375.1 1512.7,374.8 1512,374.5 C1511.2,374.3 1510.5,373.9 1509.7,373.6 C1509,373.3 1508.3,372.9 1507.7,372.6 C1507,372.2 1506.4,371.8 1505.8,371.4 C1505.2,371 1504.7,370.5 1504.1,370.1 C1503.6,369.6 1503.1,369.2 1502.7,368.7 C1502.3,368.2 1501.9,367.7 1501.5,367.2 C1501.1,366.7 1500.8,366.2 1500.6,365.6 C1500.3,365.1 1500.1,364.6 1499.9,364 C1499.7,363.5 1499.6,362.9 1499.5,362.4 C1499.4,361.8 1499.4,361.3 1499.4,360.7 C1499.4,360.2 1499.5,359.6 1499.6,359.1 C1499.7,358.5 1499.8,358 1500,357.4 C1500.2,356.9 1500.5,356.4 1500.8,355.9 C1501.1,355.3 1501.4,354.8 1501.8,354.3 C1502.2,353.9 1502.6,353.4 1503,352.9 C1503.5,352.4 1504,352 1504.5,351.6 C1505.1,351.1 1505.7,350.7 1506.3,350.3 C1506.9,349.9 1507.5,349.6 1508.2,349.2 C1508.9,348.9 1509.6,348.5 1510.3,348.2 C1511,347.9 1511.8,347.7 1512.6,347.4 C1513.4,347.2 1514.2,347 1515,346.8 C1515.8,346.6 1516.6,346.4 1517.5,346.3 C1518.3,346.1 1519.2,346 1520.1,345.9 C1520.9,345.9 1521.8,345.8 1522.7,345.8 C1523.5,345.8 1524.4,345.8 1525.3,345.8 C1526.2,345.9 1527.1,346 1527.9,346.1 C1528.8,346.2 1530.1,346.4 1530.5,346.4" fill="none" stroke="#00e5e5" stroke-width="1.4" />
<path d="M1542.5,361.6 C1542.5,361.8 1542.5,362.3 1542.4,362.6 C1542.3,363 1542.2,363.3 1542.1,363.7 C1542,364 1541.8,364.3 1541.7,364.7 C1541.5,365 1541.3,365.3 1541,365.6 C1540.8,365.9 1540.6,366.2 1540.3,366.5 C1540,366.8 1539.7,367.1 1539.3,367.4 C1539,367.7 1538.6,367.9 1538.3,368.2 C1537.9,368.5 1537.5,368.7 1537.1,368.9 C1536.7,369.1 1536.2,369.4 1535.8,369.6 C1535.3,369.7 1534.8,369.9 1534.3,370.1 C1533.9,370.3 1533.4,370.4 1532.8,370.5 C1532.3,370.7 1531.8,370.8 1531.3,370.9 C1530.7,371 1530.2,371.1 1529.7,371.1 C1529.1,371.2 1528.6,371.2 1528,371.3 C1527.4,371.3 1526.9,371.3 1526.3,371.3 C1525.8,371.3 1525.2,371.3 1524.7,371.2 C1524.1,371.2 1523.5,371.1 1523,371 C1522.5,370.9 1521.9,370.8 1521.4,370.7 C1520.9,370.6 1520.3,370.5 1519.8,370.3 C1519.3,370.2 1518.8,370 1518.4,369.8 C1517.9,369.6 1517.4,369.4 1517,369.2 C1516.5,369 1516.1,368.8 1515.7,368.5 C1515.3,368.3 1514.9,368 1514.5,367.8 C1514.1,367.5 1513.8,367.2 1513.5,367 C1513.1,366.7 1512.8,366.4 1512.6,366.1 C1512.3,365.8 1512,365.4 1511.8,365.1 C1511.6,364.8 1511.4,364.5 1511.2,364.1 C1511.1,363.8 1510.9,363.4 1510.8,363.1 C1510.7,362.8 1510.6,362.4 1510.6,362.1 C1510.5,361.7 1510.5,361.4 1510.5,361 C1510.5,360.7 1510.5,360.3 1510.6,360 C1510.7,359.6 1510.8,359.3 1510.9,358.9 C1511,358.6 1511.2,358.3 1511.3,357.9 C1511.5,357.6 1511.7,357.3 1512,357 C1512.2,356.7 1512.4,356.4 1512.7,356.1 C1513,355.8 1513.3,355.5 1513.7,355.2 C1514,354.9 1514.4,354.7 1514.7,354.4 C1515.1,354.1 1515.5,353.9 1515.9,353.7 C1516.3,353.5 1516.8,353.2 1517.2,353 C1517.7,352.9 1518.2,352.7 1518.7,352.5 C1519.1,352.3 1519.6,352.2 1520.2,352.1 C1520.7,351.9 1521.2,351.8 1521.7,351.7 C1522.3,351.6 1522.8,351.5 1523.3,351.5 C1523.9,351.4 1524.4,351.4 1525,351.3 C1525.6,351.3 1526.1,351.3 1526.7,351.3 C1527.2,351.3 1527.8,351.3 1528.3,351.4 C1528.9,351.4 1529.5,351.5 1530,351.6 C1530.5,351.7 1531.1,351.8 1531.6,351.9 C1532.1,352 1532.7,352.1 1533.2,352.3 C1533.7,352.4 1534.2,352.6 1534.6,352.8 C1535.1,353 1535.6,353.2 1536,353.4 C1536.5,353.6 1536.9,353.8 1537.3,354.1 C1537.7,354.3 1538.1,354.6 1538.5,354.8 C1538.9,355.1 1539.2,355.4 1539.5,355.6 C1539.9,355.9 1540.2,356.2 1540.4,356.5 C1540.7,356.8 1541,357.2 1541.2,357.5 C1541.4,357.8 1541.6,358.1 1541.8,358.5 C1541.9,358.8 1542.1,359.2 1542.2,359.5 C1542.3,359.8 1542.4,360.2 1542.4,360.5 C1542.5,360.9 1542.5,361.4 1542.5,361.6" fill="none" stroke="#6e6e6e" stroke-width="1.2" />
<path d="M1528.5,354.4 C1528.7,354.5 1529.4,354.6 1529.8,354.6 C1530.2,354.7 1530.6,354.8 1530.9,354.9 C1531.3,355 1531.7,355.1 1532.1,355.2 C1532.5,355.4 1532.8,355.5 1533.2,355.6 C1533.5,355.8 1533.9,356 1534.2,356.1 C1534.5,356.3 1534.8,356.5 1535.1,356.7 C1535.4,356.8 1535.7,357 1535.9,357.2 C1536.2,357.4 1536.4,357.6 1536.6,357.9 C1536.8,358.1 1537,358.3 1537.2,358.5 C1537.4,358.8 1537.6,359 1537.7,359.2 C1537.9,359.5 1538,359.7 1538.1,360 C1538.2,360.2 1538.2,360.5 1538.3,360.7 C1538.4,361 1538.4,361.2 1538.4,361.5 C1538.4,361.7 1538.4,362 1538.4,362.2 C1538.3,362.5 1538.3,362.7 1538.2,363 C1538.1,363.2 1538,363.4 1537.9,363.7 C1537.8,363.9 1537.6,364.2 1537.5,364.4 C1537.3,364.6 1537.1,364.8 1536.9,365.1 C1536.7,365.3 1536.5,365.5 1536.3,365.7 C1536,365.9 1535.8,366.1 1535.5,366.3 C1535.2,366.5 1534.9,366.7 1534.6,366.8 C1534.3,367 1534,367.2 1533.6,367.3 C1533.3,367.5 1533,367.6 1532.6,367.7 C1532.2,367.8 1531.9,368 1531.5,368.1 C1531.1,368.2 1530.5,368.3 1530.3,368.3" fill="none" stroke="#6e6e6e" stroke-width="1.2" />
<path d="M1530.3,368.3 C1530.1,368.4 1529.5,368.5 1529.1,368.5 C1528.7,368.6 1528.3,368.6 1527.9,368.7 C1527.4,368.7 1527,368.7 1526.6,368.7 C1526.2,368.7 1525.8,368.7 1525.3,368.7 C1524.9,368.6 1524.5,368.6 1524.1,368.6 C1523.7,368.5 1523.2,368.4 1522.8,368.4 C1522.4,368.3 1522,368.2 1521.7,368.1 C1521.3,368 1520.9,367.9 1520.5,367.8 C1520.1,367.6 1519.8,367.5 1519.4,367.4 C1519.1,367.2 1518.7,367 1518.4,366.9 C1518.1,366.7 1517.8,366.5 1517.5,366.3 C1517.2,366.2 1516.9,366 1516.7,365.8 C1516.4,365.6 1516.2,365.4 1516,365.1 C1515.8,364.9 1515.6,364.7 1515.4,364.5 C1515.2,364.2 1515,364 1514.9,363.8 C1514.7,363.5 1514.6,363.3 1514.5,363 C1514.4,362.8 1514.4,362.5 1514.3,362.3 C1514.2,362 1514.2,361.8 1514.2,361.5 C1514.2,361.3 1514.2,361 1514.2,360.8 C1514.3,360.5 1514.3,360.3 1514.4,360 C1514.5,359.8 1514.6,359.6 1514.7,359.3 C1514.8,359.1 1515,358.8 1515.1,358.6 C1515.3,358.4 1515.5,358.2 1515.7,357.9 C1515.9,357.7 1516.1,357.5 1516.3,357.3 C1516.6,357.1 1516.8,356.9 1517.1,356.7 C1517.4,356.5 1517.7,356.3 1518,356.2 C1518.3,356 1518.6,355.8 1519,355.7 C1519.3,355.5 1519.6,355.4 1520,355.3 C1520.4,355.2 1520.7,355 1521.1,354.9 C1521.5,354.8 1521.9,354.7 1522.3,354.7 C1522.7,354.6 1523.1,354.5 1523.5,354.5 C1523.9,354.4 1524.3,354.4 1524.7,354.3 C1525.2,354.3 1525.6,354.3 1526,354.3 C1526.4,354.3 1526.8,354.3 1527.3,354.3 C1527.7,354.4 1528.3,354.4 1528.5,354.4" fill="none" stroke="#00e5e5" stroke-width="1.4" />
<path d="M1526.9,357.5 C1527,357.5 1527.4,357.5 1527.6,357.5 C1527.8,357.5 1528.1,357.6 1528.3,357.6 C1528.5,357.6 1528.8,357.7 1529,357.7 C1529.2,357.8 1529.4,357.8 1529.7,357.9 C1529.9,357.9 1530.1,358 1530.3,358.1 C1530.5,358.2 1530.7,358.2 1530.9,358.3 C1531.1,358.4 1531.3,358.5 1531.5,358.6 C1531.6,358.7 1531.8,358.8 1532,358.9 C1532.1,359 1532.3,359.2 1532.4,359.3 C1532.5,359.4 1532.7,359.5 1532.8,359.7 C1532.9,359.8 1533,359.9 1533.1,360.1 C1533.2,360.2 1533.3,360.3 1533.4,360.5 C1533.4,360.6 1533.5,360.8 1533.6,360.9 C1533.6,361.1 1533.6,361.2 1533.7,361.4 C1533.7,361.5 1533.7,361.7 1533.7,361.8 C1533.7,361.9 1533.7,362.1 1533.7,362.2 C1533.6,362.4 1533.6,362.5 1533.6,362.7 C1533.5,362.8 1533.4,363 1533.4,363.1 C1533.3,363.3 1533.2,363.4 1533.1,363.5 C1533,363.7 1532.9,363.8 1532.8,363.9 C1532.7,364.1 1532.5,364.2 1532.4,364.3 C1532.3,364.4 1532.1,364.6 1532,364.7 C1531.8,364.8 1531.6,364.9 1531.5,365 C1531.3,365.1 1531.1,365.2 1530.9,365.3 C1530.7,365.4 1530.5,365.4 1530.3,365.5 C1530.1,365.6 1529.9,365.7 1529.7,365.7 C1529.4,365.8 1529.2,365.8 1529,365.9 C1528.8,365.9 1528.5,366 1528.3,366 C1528.1,366 1527.8,366.1 1527.6,366.1 C1527.4,366.1 1527,366.1 1526.9,366.1" fill="none" stroke="#6e6e6e" stroke-width="1.1" />
<path d="M1526.9,366.1 C1526.8,366.1 1526.4,366.1 1526.2,366.1 C1526,366.1 1525.7,366 1525.5,366 C1525.3,366 1525,365.9 1524.8,365.9 C1524.6,365.8 1524.4,365.8 1524.1,365.7 C1523.9,365.7 1523.7,365.6 1523.5,365.5 C1523.3,365.4 1523.1,365.4 1522.9,365.3 C1522.7,365.2 1522.5,365.1 1522.3,365 C1522.2,364.9 1522,364.8 1521.8,364.7 C1521.7,364.6 1521.5,364.4 1521.4,364.3 C1521.3,364.2 1521.1,364.1 1521,363.9 C1520.9,363.8 1520.8,363.7 1520.7,363.5 C1520.6,363.4 1520.5,363.3 1520.4,363.1 C1520.4,363 1520.3,362.8 1520.2,362.7 C1520.2,362.5 1520.2,362.4 1520.1,362.2 C1520.1,362.1 1520.1,361.9 1520.1,361.8 C1520.1,361.7 1520.1,361.5 1520.1,361.4 C1520.2,361.2 1520.2,361.1 1520.2,360.9 C1520.3,360.8 1520.4,360.6 1520.4,360.5 C1520.5,360.3 1520.6,360.2 1520.7,360.1 C1520.8,359.9 1520.9,359.8 1521,359.7 C1521.1,359.5 1521.3,359.4 1521.4,359.3 C1521.5,359.2 1521.7,359 1521.8,358.9 C1522,358.8 1522.2,358.7 1522.3,358.6 C1522.5,358.5 1522.7,358.4 1522.9,358.3 C1523.1,358.2 1523.3,358.2 1523.5,358.1 C1523.7,358 1523.9,357.9 1524.1,357.9 C1524.4,357.8 1524.6,357.8 1524.8,357.7 C1525,357.7 1525.3,357.6 1525.5,357.6 C1525.7,357.6 1526,357.5 1526.2,357.5 C1526.4,357.5 1526.8,357.5 1526.9,357.5" fill="none" stroke="#00e5e5" stroke-width="1.3" />
<circle cx="1526" cy="361" r="1.6" fill="#fff"/><circle cx="1531.8" cy="362.2" r="0.9" fill="#d08a50"/><circle cx="1537.2" cy="363.8" r="1" fill="#d8a860"/><circle cx="1548.1" cy="359.8" r="0.7" fill="#a08070"/>
<path d="M1622.9,589.2 C1621.9,587.1 1618.7,580.8 1616.7,576.6 C1614.6,572.4 1612.6,568.2 1610.5,564 C1608.4,559.8 1606.4,555.5 1604.3,551.3 C1602.3,547.1 1600.2,542.9 1598.2,538.7 C1596.1,534.5 1594.1,530.3 1592.1,526.1 C1590.1,521.9 1588,517.7 1586,513.5 C1584,509.2 1582,505 1580,500.8 C1578,496.6 1576,492.3 1574,488.1 C1572,483.9 1570,479.6 1568,475.4 C1566,471.1 1564.1,466.9 1562.1,462.6 C1560.2,458.4 1558.2,454.1 1556.3,449.9 C1554.4,445.6 1552.4,441.3 1550.5,437.1 C1548.6,432.8 1546.8,428.5 1544.9,424.2 C1543,419.9 1541.2,415.6 1539.4,411.3 C1537.6,407 1535.8,402.7 1534,398.4 C1532.3,394 1530.6,389.7 1528.9,385.3 C1527.3,380.9 1525.7,376.5 1524.2,372.1 C1522.7,367.7 1521,362.4 1520,358.7 C1519,355.1 1518.4,351.7 1518,350.1 C1517.7,348.5 1517.9,349.3 1517.9,349.2" fill="none" stroke="#0000f6" stroke-width="2.8" />
<path d="M1517.9,349.2 C1517.8,348.5 1517.5,346.2 1517.4,345.1 C1517.3,344 1517.3,343.3 1517.3,342.7 C1517.3,342 1517.3,341.5 1517.4,341.1 C1517.4,340.6 1517.5,340.3 1517.5,339.9 C1517.6,339.6 1517.7,339.3 1517.7,339.1 C1517.8,338.8 1517.9,338.6 1517.9,338.4 C1518,338.2 1518.1,338.1 1518.2,337.9 C1518.2,337.8 1518.3,337.6 1518.4,337.5 C1518.5,337.4 1518.5,337.3 1518.6,337.2 C1518.7,337.1 1518.8,337 1518.8,336.9 C1518.9,336.8 1519,336.7 1519.1,336.6 C1519.2,336.5 1519.2,336.5 1519.3,336.4 C1519.4,336.3 1519.5,336.3 1519.6,336.2 C1519.7,336.2 1519.8,336.1 1519.9,336 C1519.9,336 1520,336 1520.1,335.9 C1520.2,335.9 1520.3,335.8 1520.5,335.8 C1520.6,335.8 1520.7,335.7 1520.8,335.7 C1520.9,335.7 1521,335.6 1521.2,335.6 C1521.3,335.6 1521.5,335.6 1521.6,335.6 C1521.8,335.6 1521.9,335.6 1522.1,335.6 C1522.3,335.6 1522.5,335.6 1522.7,335.6 C1523,335.6 1523.2,335.7 1523.5,335.7 C1523.8,335.8 1524.1,335.9 1524.4,336 C1524.8,336.1 1525.2,336.2 1525.7,336.4 C1526.2,336.6 1526.7,336.8 1527.5,337.2 C1528.2,337.6 1529,338 1530.2,338.7 C1531.4,339.5 1532.4,340.1 1534.6,341.8 C1536.9,343.5 1540.3,346.3 1543.5,349.1 C1546.7,351.9 1550.4,355.5 1553.7,358.7 C1557,362 1560.3,365.4 1563.6,368.7 C1566.8,372.1 1570,375.5 1573.2,379 C1576.3,382.4 1579.5,385.8 1582.6,389.3 C1585.7,392.8 1588.8,396.3 1591.9,399.8 C1595,403.3 1598.1,406.9 1601.2,410.4 C1604.2,413.9 1607.3,417.5 1610.3,421 C1613.3,424.6 1616.4,428.1 1619.4,431.7 C1622.4,435.3 1625.4,438.8 1628.4,442.4 C1631.4,446 1634.4,449.6 1637.4,453.2 C1640.4,456.8 1643.4,460.4 1646.3,464 C1649.3,467.6 1652.3,471.2 1655.2,474.8 C1658.2,478.4 1661.2,482.1 1664.1,485.7 C1667.1,489.3 1670,492.9 1673,496.6 C1675.9,500.2 1678.9,503.9 1681.9,507.5 C1684.8,511.2 1687.7,514.8 1690.7,518.4 C1693.6,522.1 1696.5,525.7 1699.5,529.4 C1702.4,533 1705.4,536.7 1708.3,540.3 C1711.2,544 1714.1,547.6 1717,551.3 C1720,555 1722.9,558.6 1725.8,562.3 C1728.7,565.9 1731.6,569.6 1734.5,573.3 C1737.4,576.9 1741.3,581.8 1743.3,584.3 C1745.2,586.8 1745.8,587.5 1746.3,588.2" fill="none" stroke="#00eded" stroke-width="3.0" />
</g>
<clipPath id="c3"><rect x="114.7" y="598.0" width="801.3" height="562.3"/></clipPath>
<rect x="114.7" y="597.2" width="801.3" height="563.0999999999999" fill="#666"/>
<rect x="114.7" y="598.0" width="801.3" height="562.3" fill="#000"/>
<g clip-path="url(#c3)">
<text x="315.5" y="932.7" textLength="210.5" lengthAdjust="spacingAndGlyphs" font-family="'DejaVu Sans', Verdana, sans-serif" font-size="19.8" fill="#ff0000">C/2014 Q2 (Lovejoy)</text>
<path d="M102.2,825.1 L586.2,825.1 M88.8,839.3 L603.7,839.3 M73.5,855.4 L623.7,855.4 M55.9,873.9 L646.6,873.9 M35.6,895.4 L673.1,895.4 M11.8,920.6 L704.2,920.6 M-16.5,950.5 L741.1,950.5 M-50.7,986.6 L785.8,986.6 M-92.9,1031.1 L840.8,1031.1 M-146.1,1087.3 L910.2,1087.3 M-215.5,1160.5 L1000.7,1160.5 M102.2,825.1 L-215.5,1160.5 M150.6,825.1 L-93.9,1160.5 M199,825.1 L27.7,1160.5 M247.4,825.1 L149.4,1160.5 M295.8,825.1 L271,1160.5 M344.2,825.1 L392.6,1160.5 M392.6,825.1 L514.2,1160.5 M441,825.1 L635.9,1160.5 M489.4,825.1 L757.5,1160.5 M537.8,825.1 L879.1,1160.5 M586.2,825.1 L1000.7,1160.5" fill="none" stroke="#646464" stroke-width="1" />
<path d="M90,768 C94.1,767.6 92.7,767.6 114.7,765.6 C136.7,763.6 183.9,758.6 222.2,756.3 C260.5,754 296.4,752.3 344.5,751.9 C392.6,751.5 463.4,752.3 510.8,753.8 C558.2,755.2 589.6,757.4 629.2,760.6 C668.8,763.8 728.6,770.9 748.5,773" fill="none" stroke="#6e6e6e" stroke-width="1.1" />
<path d="M748.5,773 C762.1,774.8 802.1,779.9 830,783.5 C857.9,787.1 896.1,792.1 916.1,794.9 C936.1,797.6 944.4,799.1 950,800" fill="none" stroke="#00e5e5" stroke-width="1.3" />
<path d="M90,796 C94.1,795.4 91.9,794.8 114.7,792.4 C137.6,790 190.8,784.3 227.1,781.9 C263.4,779.5 296.4,778 332.3,777.8 C368.2,777.6 411,779.1 442.3,780.7 C473.6,782.3 497.1,785.4 520,787.6 C542.9,789.8 557.8,790.7 579.5,793.9 C601.2,797.1 625.1,802 650,807 C674.9,812 694.8,815.5 728.6,823.7 C762.4,831.9 821.8,846.9 853,856 C884.2,865.1 901.6,873.1 916.1,878.4 C930.6,883.7 936,886.4 940,888" fill="none" stroke="#6e6e6e" stroke-width="1.1" />
<path d="M57,911.3 C60.1,909.2 68.8,902.7 75.6,898.6 C82.3,894.6 89.7,890.6 97.6,886.8 C105.5,883.1 114,879.5 122.9,876.1 C131.8,872.7 141.3,869.4 151.1,866.4 C161,863.4 171.3,860.6 182,858.1 C192.7,855.5 203.8,853.2 215.2,851.1 C226.6,849 238.4,847.1 250.3,845.5 C262.3,843.9 274.6,842.5 287,841.4 C299.4,840.3 312,839.4 324.8,838.8 C337.5,838.3 350.4,837.9 363.2,837.9 C376.1,837.8 389.1,838 402,838.5 C414.9,838.9 427.8,839.6 440.6,840.6 C453.4,841.6 466.1,842.9 478.6,844.3 C491.1,845.8 503.6,847.6 515.7,849.6 C527.7,851.5 539.7,853.8 551.2,856.2 C562.8,858.7 574.1,861.4 585,864.3 C595.9,867.2 611.3,872 616.6,873.6" fill="none" stroke="#6e6e6e" stroke-width="1.1" />
<path d="M616.6,873.6 C621.4,875.3 636.5,880.4 645.7,884.1 C654.9,887.8 663.7,891.7 671.9,895.8 C680.1,899.8 687.9,904 695,908.3 C702.1,912.6 708.6,917.1 714.5,921.7 C720.4,926.3 725.8,930.9 730.4,935.7 C735.1,940.5 739.1,945.3 742.4,950.2 C745.8,955.1 748.5,960.1 750.4,965 C752.4,970 753.8,975 754.4,980 C755,985 754.9,990 754.2,995 C753.4,1000 752,1004.9 749.9,1009.8 C747.7,1014.7 744.9,1019.5 741.4,1024.2 C738,1029 733.8,1033.6 729,1038.2 C724.3,1042.7 718.8,1047.2 712.8,1051.4 C706.8,1055.7 700.1,1059.9 692.9,1063.9 C685.7,1067.9 677.9,1071.8 669.5,1075.4 C661.2,1079.1 652.3,1082.6 643,1085.8 C633.7,1089.1 623.8,1092.2 613.6,1095 C603.4,1097.9 592.7,1100.5 581.7,1102.9 C570.7,1105.3 559.2,1107.5 547.5,1109.4 C535.9,1111.4 523.8,1113.1 511.6,1114.5 C499.4,1115.9 486.9,1117.1 474.3,1118 C461.7,1118.9 448.8,1119.5 436,1119.9 C423.1,1120.3 410.1,1120.4 397.1,1120.3 C384.2,1120.1 371.1,1119.7 358.2,1119 C345.3,1118.4 332.3,1117.4 319.6,1116.2 C306.9,1115 294.2,1113.6 281.8,1111.9 C269.3,1110.2 257.1,1108.2 245.1,1106 C233.2,1103.8 221.4,1101.4 210.1,1098.7 C198.8,1096.1 187.7,1093.2 177.1,1090.1 C166.5,1087 156.2,1083.7 146.4,1080.2 C136.7,1076.7 127.3,1073 118.5,1069.1 C109.7,1065.3 101.4,1061.2 93.7,1057.1 C85.9,1052.9 78.7,1048.6 72.1,1044.2 C65.5,1039.7 57.1,1032.8 54.1,1030.5" fill="none" stroke="#00e5e5" stroke-width="1.3" />
<path d="M179.3,924.8 C180.1,923.6 182.1,919.8 184,917.3 C185.9,914.9 188.1,912.4 190.7,910.1 C193.3,907.7 196.2,905.4 199.4,903.2 C202.6,900.9 206.1,898.8 209.9,896.7 C213.8,894.6 217.9,892.6 222.3,890.7 C226.7,888.8 231.3,887 236.2,885.3 C241.1,883.6 246.3,882 251.6,880.5 C257,879 262.6,877.6 268.3,876.4 C274.1,875.2 280,874 286.1,873 C292.2,872 298.5,871.1 304.8,870.4 C311.1,869.7 317.6,869 324.2,868.6 C330.7,868.1 337.3,867.8 344,867.6 C350.6,867.4 357.3,867.3 364,867.4 C370.7,867.5 377.4,867.7 384.1,868 C390.7,868.4 397.3,868.9 403.9,869.5 C410.4,870.2 416.9,870.9 423.2,871.8 C429.6,872.7 435.8,873.7 441.9,874.9 C448,876 454,877.3 459.7,878.7 C465.4,880.1 471,881.6 476.4,883.2 C481.7,884.8 486.9,886.5 491.8,888.3 C496.7,890.2 501.4,892.1 505.8,894.1 C510.1,896.1 514.3,898.2 518.1,900.4 C521.9,902.5 526.9,906 528.6,907.1" fill="none" stroke="#6e6e6e" stroke-width="1.1" />
<path d="M528.6,907.1 C530.1,908.3 534.7,911.7 537.3,914.1 C539.8,916.5 542,919 543.9,921.5 C545.8,924 547.4,926.5 548.6,929 C549.8,931.6 550.6,934.1 551.1,936.7 C551.6,939.3 551.8,941.9 551.6,944.4 C551.4,947 550.8,949.5 549.9,952.1 C549,954.6 547.8,957.1 546.2,959.6 C544.6,962.1 542.7,964.5 540.4,966.9 C538.1,969.3 535.5,971.6 532.6,973.9 C529.7,976.2 526.4,978.4 522.9,980.5 C519.4,982.6 515.5,984.7 511.4,986.7 C507.3,988.6 502.9,990.5 498.3,992.3 C493.7,994.1 488.8,995.8 483.7,997.4 C478.5,998.9 473.2,1000.4 467.7,1001.8 C462.1,1003.1 456.4,1004.4 450.5,1005.5 C444.6,1006.6 438.5,1007.6 432.4,1008.4 C426.2,1009.3 419.8,1010 413.4,1010.6 C407,1011.2 400.5,1011.7 394,1012 C387.4,1012.4 380.8,1012.6 374.2,1012.6 C367.6,1012.7 360.9,1012.6 354.3,1012.4 C347.6,1012.2 341,1011.8 334.4,1011.3 C327.9,1010.9 321.4,1010.2 315,1009.5 C308.6,1008.8 302.2,1007.9 296,1006.9 C289.9,1005.9 283.8,1004.7 277.9,1003.5 C272,1002.2 266.2,1000.9 260.7,999.4 C255.2,997.9 249.8,996.3 244.7,994.6 C239.6,992.9 234.6,991.1 230,989.2 C225.4,987.4 220.9,985.4 216.8,983.3 C212.7,981.2 208.9,979.1 205.3,976.9 C201.8,974.7 198.5,972.4 195.6,970 C192.7,967.7 190,965.3 187.8,962.9 C185.5,960.4 183.5,957.9 181.9,955.4 C180.3,952.9 179,950.4 178.1,947.8 C177.2,945.3 176.6,942.7 176.4,940.1 C176.2,937.6 176.3,935 176.8,932.4 C177.3,929.9 178.9,926.1 179.3,924.8" fill="none" stroke="#00e5e5" stroke-width="1.3" />
<path d="M303,922.4 C303.1,922 303.2,920.9 303.4,920.2 C303.6,919.5 303.9,918.8 304.3,918.2 C304.7,917.5 305.2,916.8 305.8,916.1 C306.4,915.5 307.1,914.8 307.9,914.2 C308.7,913.6 309.6,913 310.5,912.4 C311.5,911.8 312.6,911.3 313.7,910.7 C314.8,910.2 316,909.7 317.3,909.2 C318.6,908.7 319.9,908.2 321.3,907.8 C322.7,907.4 324.2,907 325.7,906.6 C327.3,906.3 328.8,905.9 330.5,905.6 C332.1,905.3 333.8,905.1 335.5,904.9 C337.2,904.6 339,904.5 340.7,904.3 C342.5,904.2 344.3,904 346.1,904 C348,903.9 349.8,903.9 351.6,903.9 C353.5,903.9 355.3,903.9 357.2,904 C359,904.1 360.8,904.2 362.7,904.3 C364.5,904.5 366.3,904.7 368.1,904.9 C369.8,905.1 371.6,905.4 373.3,905.7 C375,906 376.7,906.3 378.3,906.7 C379.9,907.1 381.5,907.5 383.1,907.9 C384.6,908.3 386.1,908.8 387.5,909.3 C388.9,909.8 390.2,910.3 391.5,910.8 C392.8,911.4 394,911.9 395.1,912.5 C396.2,913.1 397.3,913.7 398.2,914.4 C399.2,915 400.1,915.6 400.9,916.3 C401.7,916.9 402.4,917.6 403,918.3 C403.6,919 404.1,919.7 404.5,920.4 C404.9,921.1 405.2,921.8 405.4,922.5 C405.6,923.2 405.8,923.9 405.8,924.6 C405.8,925.4 405.6,926.4 405.5,926.8" fill="none" stroke="#6e6e6e" stroke-width="1" />
<path d="M405.5,926.8 C405.4,927.1 405.1,928.1 404.7,928.8 C404.4,929.5 403.9,930.1 403.4,930.8 C402.8,931.4 402.2,932.1 401.5,932.7 C400.7,933.3 399.9,933.9 399,934.5 C398.1,935.1 397.2,935.7 396.1,936.2 C395.1,936.7 393.9,937.3 392.7,937.8 C391.5,938.2 390.2,938.7 388.9,939.1 C387.6,939.6 386.2,940 384.7,940.4 C383.3,940.7 381.7,941.1 380.2,941.4 C378.6,941.7 377,942 375.4,942.3 C373.7,942.5 372,942.7 370.3,942.9 C368.6,943.1 366.9,943.2 365.1,943.3 C363.3,943.4 361.5,943.5 359.7,943.5 C358,943.5 356.1,943.5 354.3,943.5 C352.5,943.5 350.7,943.4 348.9,943.3 C347.2,943.2 345.4,943 343.6,942.8 C341.8,942.6 340.1,942.4 338.4,942.2 C336.7,941.9 335,941.6 333.3,941.3 C331.7,941 330.1,940.6 328.5,940.2 C327,939.9 325.5,939.4 324,939 C322.6,938.5 321.1,938.1 319.8,937.6 C318.5,937.1 317.2,936.6 316,936 C314.8,935.5 313.7,934.9 312.6,934.3 C311.6,933.7 310.6,933.1 309.7,932.5 C308.8,931.9 308,931.2 307.3,930.6 C306.6,929.9 305.9,929.2 305.4,928.6 C304.9,927.9 304.4,927.2 304,926.5 C303.7,925.8 303.4,925.1 303.2,924.4 C303.1,923.7 303.1,922.7 303,922.4" fill="none" stroke="#00e5e5" stroke-width="1.3" />
<path d="M390.8,923 C390.8,923.2 390.7,924 390.6,924.4 C390.4,924.9 390.2,925.4 389.9,925.9 C389.6,926.3 389.2,926.8 388.8,927.2 C388.4,927.7 387.9,928.1 387.3,928.6 C386.7,929 386.1,929.4 385.4,929.8 C384.7,930.3 384,930.6 383.1,931 C382.3,931.4 381.5,931.8 380.5,932.1 C379.6,932.5 378.6,932.8 377.6,933.1 C376.6,933.4 375.5,933.7 374.4,933.9 C373.3,934.2 372.1,934.5 370.9,934.7 C369.7,934.9 368.5,935.1 367.3,935.3 C366,935.5 364.7,935.6 363.4,935.7 C362.1,935.9 360.8,936 359.4,936 C358.1,936.1 356.7,936.2 355.4,936.2 C354,936.2 352.6,936.2 351.3,936.2 C349.9,936.2 348.5,936.1 347.2,936.1 C345.8,936 344.4,935.9 343.1,935.8 C341.8,935.6 340.4,935.5 339.1,935.3 C337.8,935.1 336.5,934.9 335.3,934.7 C334,934.5 332.8,934.3 331.6,934 C330.5,933.7 329.3,933.4 328.2,933.1 C327.1,932.8 326,932.5 325,932.2 C324,931.8 323,931.5 322.1,931.1 C321.2,930.7 320.4,930.3 319.6,929.9 C318.8,929.5 318,929.1 317.3,928.7 C316.7,928.2 316.1,927.8 315.5,927.3 C315,926.9 314.5,926.4 314.1,925.9 C313.6,925.5 313.3,925 313,924.5 C312.7,924 312.5,923.6 312.4,923.1 C312.3,922.6 312.2,922.1 312.2,921.6 C312.2,921.1 312.3,920.6 312.4,920.2 C312.6,919.7 312.8,919.2 313.1,918.7 C313.4,918.3 313.8,917.8 314.2,917.4 C314.6,916.9 315.1,916.5 315.7,916 C316.3,915.6 316.9,915.2 317.6,914.8 C318.3,914.3 319,914 319.9,913.6 C320.7,913.2 321.5,912.8 322.5,912.5 C323.4,912.1 324.4,911.8 325.4,911.5 C326.4,911.2 327.5,910.9 328.6,910.7 C329.7,910.4 330.9,910.1 332.1,909.9 C333.3,909.7 334.5,909.5 335.7,909.3 C337,909.1 338.3,909 339.6,908.9 C340.9,908.7 342.2,908.6 343.6,908.6 C344.9,908.5 346.3,908.4 347.6,908.4 C349,908.4 350.4,908.4 351.7,908.4 C353.1,908.4 354.5,908.5 355.8,908.5 C357.2,908.6 358.6,908.7 359.9,908.8 C361.2,909 362.6,909.1 363.9,909.3 C365.2,909.5 366.5,909.7 367.7,909.9 C369,910.1 370.2,910.3 371.4,910.6 C372.5,910.9 373.7,911.2 374.8,911.5 C375.9,911.8 377,912.1 378,912.4 C379,912.8 380,913.1 380.9,913.5 C381.8,913.9 382.6,914.3 383.4,914.7 C384.2,915.1 385,915.5 385.7,915.9 C386.3,916.4 386.9,916.8 387.5,917.3 C388,917.7 388.5,918.2 388.9,918.7 C389.4,919.1 389.7,919.6 390,920.1 C390.3,920.6 390.5,921 390.6,921.5 C390.7,922 390.8,922.7 390.8,923" fill="none" stroke="#6e6e6e" stroke-width="1" />
<path d="M333,920 C333,919.9 333.1,919.4 333.2,919.1 C333.3,918.8 333.4,918.5 333.6,918.2 C333.8,917.9 334,917.6 334.3,917.3 C334.6,917 334.9,916.7 335.3,916.4 C335.7,916.1 336.1,915.9 336.6,915.6 C337,915.3 337.5,915.1 338.1,914.8 C338.6,914.6 339.2,914.4 339.8,914.1 C340.4,913.9 341,913.7 341.7,913.5 C342.4,913.3 343.1,913.1 343.8,913 C344.6,912.8 345.4,912.6 346.1,912.5 C346.9,912.3 347.7,912.2 348.6,912.1 C349.4,912 350.3,911.9 351.1,911.8 C352,911.7 352.9,911.7 353.7,911.6 C354.6,911.6 355.5,911.5 356.4,911.5 C357.3,911.5 358.3,911.5 359.2,911.5 C360.1,911.5 361,911.5 361.9,911.6 C362.8,911.6 363.7,911.7 364.6,911.8 C365.4,911.9 366.3,912 367.2,912.1 C368,912.2 368.9,912.3 369.7,912.5 C370.5,912.6 371.4,912.8 372.1,912.9 C372.9,913.1 373.7,913.3 374.4,913.5 C375.1,913.7 375.8,913.9 376.5,914.1 C377.2,914.3 377.8,914.6 378.4,914.8 C379,915.1 379.6,915.3 380.1,915.6 C380.7,915.8 381.1,916.1 381.6,916.4 C382,916.7 382.4,917 382.8,917.3 C383.2,917.5 383.5,917.8 383.8,918.2 C384,918.5 384.3,918.8 384.5,919.1 C384.6,919.4 384.8,919.7 384.9,920 C385,920.3 385,920.8 385,921" fill="none" stroke="#6e6e6e" stroke-width="1" />
<path d="M385,921 C385,921.1 384.9,921.6 384.8,921.9 C384.7,922.2 384.6,922.5 384.4,922.8 C384.2,923.1 384,923.4 383.7,923.7 C383.4,924 383.1,924.3 382.7,924.6 C382.3,924.9 381.9,925.1 381.4,925.4 C381,925.7 380.5,925.9 379.9,926.2 C379.4,926.4 378.8,926.6 378.2,926.9 C377.6,927.1 377,927.3 376.3,927.5 C375.6,927.7 374.9,927.9 374.2,928 C373.4,928.2 372.6,928.4 371.9,928.5 C371.1,928.7 370.3,928.8 369.4,928.9 C368.6,929 367.7,929.1 366.9,929.2 C366,929.3 365.1,929.3 364.3,929.4 C363.4,929.4 362.5,929.5 361.6,929.5 C360.7,929.5 359.7,929.5 358.8,929.5 C357.9,929.5 357,929.5 356.1,929.4 C355.2,929.4 354.3,929.3 353.4,929.2 C352.6,929.1 351.7,929 350.8,928.9 C350,928.8 349.1,928.7 348.3,928.5 C347.5,928.4 346.6,928.2 345.9,928.1 C345.1,927.9 344.3,927.7 343.6,927.5 C342.9,927.3 342.2,927.1 341.5,926.9 C340.8,926.7 340.2,926.4 339.6,926.2 C339,925.9 338.4,925.7 337.9,925.4 C337.3,925.2 336.9,924.9 336.4,924.6 C336,924.3 335.6,924 335.2,923.7 C334.8,923.5 334.5,923.2 334.2,922.8 C334,922.5 333.7,922.2 333.5,921.9 C333.4,921.6 333.2,921.3 333.1,921 C333,920.7 333,920.2 333,920" fill="none" stroke="#00e5e5" stroke-width="1.3" />
<path d="M374,919.8 C374,919.9 374,920.1 373.9,920.3 C373.9,920.5 373.8,920.7 373.7,920.8 C373.6,921 373.5,921.2 373.3,921.3 C373.2,921.5 373,921.7 372.8,921.8 C372.6,922 372.4,922.1 372.1,922.3 C371.9,922.5 371.6,922.6 371.3,922.7 C371,922.9 370.7,923 370.4,923.1 C370.1,923.3 369.7,923.4 369.4,923.5 C369,923.6 368.6,923.7 368.2,923.8 C367.8,923.9 367.4,924 367,924.1 C366.6,924.2 366.1,924.3 365.7,924.4 C365.2,924.4 364.8,924.5 364.3,924.6 C363.9,924.6 363.4,924.7 362.9,924.7 C362.4,924.7 361.9,924.8 361.5,924.8 C361,924.8 360.5,924.8 360,924.8 C359.5,924.8 359,924.8 358.5,924.8 C358.1,924.8 357.6,924.7 357.1,924.7 C356.6,924.7 356.1,924.6 355.7,924.6 C355.2,924.5 354.8,924.4 354.3,924.4 C353.9,924.3 353.4,924.2 353,924.1 C352.6,924 352.2,923.9 351.8,923.8 C351.4,923.7 351,923.6 350.6,923.5 C350.3,923.4 349.9,923.3 349.6,923.1 C349.3,923 349,922.9 348.7,922.7 C348.4,922.6 348.1,922.5 347.9,922.3 C347.6,922.1 347.4,922 347.2,921.8 C347,921.7 346.8,921.5 346.7,921.3 C346.5,921.2 346.4,921 346.3,920.8 C346.2,920.7 346.1,920.5 346.1,920.3 C346,920.1 346,920 346,919.8 C346,919.6 346,919.5 346.1,919.3 C346.1,919.1 346.2,918.9 346.3,918.8 C346.4,918.6 346.5,918.4 346.7,918.3 C346.8,918.1 347,917.9 347.2,917.8 C347.4,917.6 347.6,917.5 347.9,917.3 C348.1,917.1 348.4,917 348.7,916.9 C349,916.7 349.3,916.6 349.6,916.5 C349.9,916.3 350.3,916.2 350.6,916.1 C351,916 351.4,915.9 351.8,915.8 C352.2,915.7 352.6,915.6 353,915.5 C353.4,915.4 353.9,915.3 354.3,915.2 C354.8,915.2 355.2,915.1 355.7,915 C356.1,915 356.6,914.9 357.1,914.9 C357.6,914.9 358.1,914.8 358.5,914.8 C359,914.8 359.5,914.8 360,914.8 C360.5,914.8 361,914.8 361.5,914.8 C361.9,914.8 362.4,914.9 362.9,914.9 C363.4,914.9 363.9,915 364.3,915 C364.8,915.1 365.2,915.2 365.7,915.2 C366.1,915.3 366.6,915.4 367,915.5 C367.4,915.6 367.8,915.7 368.2,915.8 C368.6,915.9 369,916 369.4,916.1 C369.7,916.2 370.1,916.3 370.4,916.5 C370.7,916.6 371,916.7 371.3,916.9 C371.6,917 371.9,917.1 372.1,917.3 C372.4,917.5 372.6,917.6 372.8,917.8 C373,917.9 373.2,918.1 373.3,918.3 C373.5,918.4 373.6,918.6 373.7,918.8 C373.8,918.9 373.9,919.1 373.9,919.3 C374,919.5 374,919.7 374,919.8" fill="none" stroke="#6e6e6e" stroke-width="1" />
<path d="M922,721.3 C919.7,721.5 912.7,722.2 908,722.6 C903.3,723.1 898.7,723.6 894,724 C889.3,724.5 884.6,725 880,725.5 C875.3,726 870.6,726.5 866,727 C861.3,727.5 856.7,728 852,728.6 C847.4,729.1 842.7,729.6 838.1,730.2 C833.4,730.7 828.8,731.3 824.2,731.8 C819.5,732.4 814.8,733 810.2,733.6 C805.6,734.2 800.9,734.7 796.3,735.4 C791.6,736 787,736.6 782.3,737.2 C777.7,737.8 773.1,738.5 768.5,739.1 C763.8,739.8 759.2,740.4 754.5,741.1 C749.9,741.8 745.3,742.4 740.6,743.1 C736,743.8 731.3,744.5 726.7,745.3 C722.1,746 717.4,746.7 712.8,747.4 C708.2,748.2 703.5,748.9 698.9,749.7 C694.3,750.5 689.6,751.3 685,752.1 C680.4,752.9 675.8,753.7 671.2,754.5 C666.6,755.3 662,756.2 657.4,757 C652.8,757.9 648.2,758.7 643.6,759.6 C639,760.5 634.4,761.4 629.8,762.3 C625.2,763.3 620.6,764.2 616,765.2 C611.5,766.1 606.9,767.1 602.3,768.1 C597.8,769.1 593.2,770.1 588.6,771.1 C584,772.2 579.5,773.2 574.9,774.3 C570.4,775.4 565.8,776.4 561.3,777.6 C556.8,778.7 552.2,779.8 547.7,781 C543.2,782.2 538.6,783.3 534.1,784.6 C529.6,785.8 525.1,787 520.6,788.3 C516.1,789.6 511.6,790.9 507.1,792.2 C502.7,793.5 498.2,794.9 493.7,796.3 C489.3,797.7 484.8,799.1 480.4,800.6 C475.9,802.1 471.5,803.6 467.1,805.1 C462.7,806.7 458.3,808.3 453.9,809.9 C449.5,811.5 445.1,813.2 440.8,814.9 C436.4,816.7 432.1,818.4 427.8,820.3 C423.5,822.1 419.2,824 415,826 C410.7,827.9 406.5,829.9 402.3,832 C398.2,834.1 394,836.3 389.9,838.5 C385.8,840.7 381.8,843.1 377.8,845.5 C373.8,847.9 369.8,850.4 366,853.1 C362.1,855.7 358.3,858.4 354.6,861.3 C351,864.2 347.2,867.4 343.9,870.3 C340.7,873.3 337.8,876.3 335.2,879 C332.7,881.7 330.6,884.3 328.7,886.8 C326.8,889.2 325.2,891.6 323.8,893.8 C322.3,896.1 321.1,898.3 320,900.4 C318.9,902.5 317.9,904.6 317.1,906.6 C316.3,908.6 315.6,910.6 315,912.5 C314.3,914.5 313.8,916.4 313.4,918.3 C313,920.2 312.7,922 312.4,923.9 C312.2,925.8 312,928.3 311.9,929.6 C311.9,931 311.9,931.6 311.9,932" fill="none" stroke="#00eded" stroke-width="3.3" />
<path d="M311.9,932 C311.9,933 312,935.9 312.1,937.9 C312.3,939.8 312.5,941.9 312.9,943.9 C313.3,946 313.7,948.1 314.3,950.3 C314.9,952.5 315.6,954.8 316.4,957.2 C317.3,959.5 318.2,962 319.5,964.6 C320.7,967.2 322,969.9 323.7,972.9 C325.5,975.8 327.3,978.8 329.7,982.2 C332,985.6 335,989.5 338,993 C340.9,996.6 344.1,1000.1 347.3,1003.5 C350.6,1006.8 353.9,1010.1 357.3,1013.3 C360.8,1016.4 364.3,1019.5 367.9,1022.5 C371.4,1025.5 375.1,1028.4 378.8,1031.3 C382.5,1034.2 386.2,1036.9 390,1039.7 C393.8,1042.4 397.7,1045 401.5,1047.7 C405.4,1050.3 409.4,1052.8 413.3,1055.4 C417.2,1057.9 421.2,1060.3 425.2,1062.7 C429.2,1065.1 433.2,1067.5 437.3,1069.9 C441.3,1072.2 445.4,1074.5 449.5,1076.7 C453.6,1079 457.7,1081.2 461.8,1083.4 C466,1085.6 470.1,1087.8 474.3,1089.9 C478.4,1092 482.6,1094.1 486.8,1096.2 C491,1098.3 495.2,1100.3 499.5,1102.3 C503.7,1104.4 507.9,1106.4 512.2,1108.3 C516.4,1110.3 520.7,1112.2 524.9,1114.2 C529.2,1116.1 533.5,1118 537.8,1119.9 C542.1,1121.7 546.4,1123.6 550.7,1125.4 C555,1127.3 559.3,1129.1 563.6,1130.9 C567.9,1132.7 572.2,1134.4 576.6,1136.2 C580.9,1138 585.2,1139.7 589.6,1141.4 C593.9,1143.2 598.3,1144.9 602.7,1146.6 C607,1148.3 611.4,1149.9 615.7,1151.6 C620.1,1153.3 624.9,1155.1 628.9,1156.6 C632.9,1158.1 638,1159.9 639.9,1160.6" fill="none" stroke="#0000f6" stroke-width="3.3" />
</g>
<clipPath id="c4"><rect x="1019.0999999999999" y="600.9" width="660.0" height="560.9"/></clipPath>
<rect x="1018.3" y="600" width="660.8" height="561.8" fill="#6a6a6a"/>
<rect x="1019.0999999999999" y="600.9" width="660.0" height="560.9" fill="#000"/>
<g clip-path="url(#c4)">
<text x="1374.3" y="934.8" textLength="210.5" lengthAdjust="spacingAndGlyphs" font-family="'DejaVu Sans', Verdana, sans-serif" font-size="19.8" fill="#ff0000">C/2014 Q2 (Lovejoy)</text>
<path d="M1335.7,828.6 L1013,930 M1335.7,828.6 L1662,908 M1360.5,834.6 L1036.6,942.8 M1312.7,835.8 L1644.9,921.4 M1386.6,841 L1062.2,956.7 M1288.3,843.5 L1626.3,936 M1414.2,847.7 L1090,971.8 M1262.1,851.7 L1605.8,951.9 M1443.4,854.8 L1120.3,988.3 M1234.1,860.5 L1583.3,969.6 M1474.3,862.3 L1153.4,1006.2 M1204.1,870 L1558.4,989.1 M1507.2,870.3 L1189.7,1026 M1171.7,880.1 L1530.6,1010.7 M1542.2,878.8 L1229.8,1047.7 M1136.7,891.1 L1499.6,1035 M1579.5,887.9 L1274.2,1071.9 M1098.9,903 L1464.6,1062.4 M1619.3,897.6 L1323.8,1098.8 M1057.8,915.9 L1424.9,1093.4 M1662,908 L1379.4,1129 M1013,930 L1379.4,1129" fill="none" stroke="#646464" stroke-width="1" />
<path d="M973.5,809.3 C982.8,806.8 1009.9,798.9 1029.3,794.4 C1048.7,789.8 1069,785.7 1089.9,782.1 C1110.8,778.5 1132.4,775.3 1154.5,772.6 C1176.6,770 1199.4,767.7 1222.5,766.1 C1245.6,764.4 1269.2,763.2 1293,762.5 C1316.8,761.8 1341,761.6 1365.3,761.9 C1389.5,762.2 1414.1,763 1438.5,764.3 C1462.9,765.6 1487.5,767.5 1511.8,769.8 C1536.1,772.1 1560.5,774.9 1584.4,778.2 C1608.4,781.4 1632.2,785.2 1655.5,789.4 C1678.8,793.6 1712.8,801 1724.2,803.3" fill="none" stroke="#00e5e5" stroke-width="1.3" />
<path d="M987.1,876.2 C990.5,874.8 1000.7,870.7 1007.7,868 C1014.6,865.4 1021.7,862.8 1028.8,860.3 C1035.9,857.8 1043.1,855.4 1050.4,853.1 C1057.6,850.8 1065,848.6 1072.4,846.4 C1079.8,844.3 1087.3,842.2 1094.8,840.3 C1102.4,838.3 1110,836.4 1117.7,834.6 C1125.3,832.9 1133.1,831.2 1140.8,829.5 C1148.6,827.9 1160.4,825.7 1164.3,825" fill="none" stroke="#6e6e6e" stroke-width="1.1" />
<path d="M1164.3,825 C1175.9,823.3 1210.2,817.5 1233.5,814.9 C1256.8,812.4 1280.5,810.6 1304.2,809.6 C1327.9,808.6 1351.8,808.4 1375.5,809 C1399.2,809.6 1423.1,811 1446.6,813.2 C1470.1,815.4 1493.5,818.4 1516.5,822.1 C1539.5,825.8 1562.3,830.4 1584.5,835.6 C1606.7,840.9 1628.6,846.9 1649.7,853.6 C1670.9,860.3 1701.1,872.1 1711.4,875.8" fill="none" stroke="#00e5e5" stroke-width="1.3" />
<path d="M1561.1,930.3 C1561.1,932.1 1561.5,937.3 1561,940.8 C1560.6,944.3 1559.7,947.8 1558.5,951.3 C1557.2,954.8 1555.5,958.3 1553.4,961.7 C1551.3,965.1 1548.8,968.6 1545.9,971.9 C1543,975.2 1539.7,978.5 1536,981.7 C1532.3,984.9 1528.3,988.1 1523.9,991.1 C1519.5,994.2 1514.7,997.1 1509.6,1000 C1504.6,1002.8 1499.1,1005.6 1493.5,1008.2 C1487.8,1010.8 1481.7,1013.3 1475.5,1015.6 C1469.3,1018 1462.7,1020.2 1456,1022.3 C1449.2,1024.3 1442.2,1026.2 1435.1,1028 C1428,1029.7 1420.6,1031.3 1413.1,1032.8 C1405.7,1034.2 1398,1035.4 1390.3,1036.5 C1382.6,1037.6 1374.7,1038.5 1366.8,1039.2 C1359,1039.9 1351,1040.4 1343,1040.8 C1335.1,1041.1 1327.1,1041.3 1319.2,1041.2 C1311.2,1041.2 1303.3,1041 1295.5,1040.6 C1287.7,1040.2 1279.9,1039.6 1272.3,1038.9 C1264.7,1038.1 1257.1,1037.1 1249.8,1036 C1242.5,1034.9 1235.3,1033.6 1228.3,1032.1 C1221.3,1030.7 1214.5,1029 1208,1027.2 C1201.5,1025.4 1195.2,1023.5 1189.2,1021.4 C1183.2,1019.3 1177.4,1017 1172,1014.6 C1166.6,1012.2 1161.4,1009.7 1156.7,1007.1 C1151.9,1004.4 1147.4,1001.6 1143.4,998.8 C1139.3,995.9 1135.6,992.9 1132.2,989.8 C1128.9,986.8 1126,983.6 1123.4,980.4 C1120.9,977.1 1118.7,973.8 1117,970.5 C1115.3,967.1 1114,963.7 1113.1,960.3 C1112.2,956.8 1111.7,953.3 1111.6,949.8 C1111.6,946.3 1112,942.8 1112.7,939.3 C1113.5,935.8 1114.8,932.3 1116.4,928.9 C1118,925.4 1120,921.9 1122.5,918.5 C1124.9,915.2 1127.8,911.8 1131,908.5 C1134.2,905.2 1140,900.4 1141.9,898.8" fill="none" stroke="#6e6e6e" stroke-width="1.1" />
<path d="M1141.9,898.8 C1144,897.3 1150.3,892.6 1155,889.6 C1159.7,886.6 1164.8,883.7 1170.2,881 C1175.6,878.2 1181.3,875.5 1187.3,873 C1193.3,870.5 1199.6,868.1 1206.1,865.9 C1212.6,863.6 1219.4,861.5 1226.4,859.6 C1233.3,857.7 1240.6,855.9 1247.9,854.3 C1255.3,852.7 1262.8,851.2 1270.5,850 C1278.1,848.7 1285.9,847.6 1293.8,846.7 C1301.6,845.8 1309.6,845.1 1317.6,844.5 C1325.5,844 1333.6,843.6 1341.6,843.5 C1349.6,843.3 1357.6,843.3 1365.6,843.5 C1373.5,843.7 1381.4,844.1 1389.2,844.7 C1397,845.3 1404.7,846.1 1412.2,847 C1419.7,848 1427.2,849.1 1434.4,850.4 C1441.6,851.7 1448.6,853.2 1455.4,854.9 C1462.2,856.5 1468.8,858.4 1475.1,860.3 C1481.4,862.3 1487.5,864.4 1493.2,866.7 C1498.9,869 1504.4,871.4 1509.5,874 C1514.6,876.5 1519.4,879.2 1523.8,882 C1528.3,884.8 1532.4,887.7 1536,890.7 C1539.7,893.7 1543.1,896.8 1546,900 C1548.9,903.2 1551.4,906.5 1553.5,909.8 C1555.6,913.1 1557.3,916.5 1558.6,919.9 C1559.8,923.4 1560.7,928.6 1561.1,930.3" fill="none" stroke="#00e5e5" stroke-width="1.3" />
<path d="M1460.7,938.6 C1459.9,939.4 1457.6,941.9 1455.8,943.5 C1453.9,945.1 1451.9,946.7 1449.6,948.2 C1447.4,949.7 1445,951.2 1442.4,952.6 C1439.8,954 1437.1,955.4 1434.2,956.7 C1431.3,958 1428.2,959.2 1425,960.4 C1421.8,961.6 1418.4,962.7 1415,963.7 C1411.5,964.8 1407.9,965.7 1404.2,966.6 C1400.5,967.5 1396.7,968.3 1392.9,969 C1389,969.7 1385,970.4 1381,970.9 C1377,971.5 1373,971.9 1368.9,972.3 C1364.8,972.7 1360.6,972.9 1356.5,973.1 C1352.3,973.3 1348.2,973.4 1344,973.4 C1339.9,973.4 1335.7,973.3 1331.6,973.2 C1327.5,973 1323.4,972.7 1319.4,972.4 C1315.4,972 1311.4,971.6 1307.6,971 C1303.7,970.5 1299.9,969.9 1296.2,969.2 C1292.5,968.5 1288.9,967.7 1285.4,966.8 C1281.9,965.9 1278.5,965 1275.3,963.9 C1272.1,962.9 1269,961.8 1266,960.6 C1263.1,959.5 1260.3,958.2 1257.7,956.9 C1255.1,955.6 1252.6,954.3 1250.4,952.9 C1248.1,951.5 1246,950 1244.1,948.5 C1242.3,947 1240.6,945.4 1239.1,943.8 C1237.6,942.2 1236.3,940.6 1235.3,938.9 C1234.2,937.3 1233.3,935.6 1232.7,933.9 C1232.1,932.2 1231.6,930.4 1231.4,928.7 C1231.2,927 1231.2,925.2 1231.5,923.5 C1231.7,921.7 1232.2,920 1232.8,918.2 C1233.5,916.5 1234.4,914.8 1235.5,913.1 C1236.6,911.4 1237.9,909.7 1239.4,908 C1240.9,906.4 1242.6,904.7 1244.5,903.2 C1246.4,901.6 1249.8,899.3 1250.8,898.5" fill="none" stroke="#6e6e6e" stroke-width="1.1" />
<path d="M1250.8,898.5 C1252.1,897.8 1255.7,895.5 1258.4,894 C1261.2,892.6 1264.1,891.2 1267.2,889.9 C1270.2,888.6 1273.5,887.3 1276.9,886.1 C1280.2,884.9 1283.8,883.8 1287.4,882.8 C1291,881.8 1294.8,880.8 1298.7,880 C1302.5,879.1 1306.5,878.4 1310.6,877.7 C1314.6,877 1318.7,876.4 1322.9,875.9 C1327.1,875.4 1331.3,875 1335.6,874.7 C1339.8,874.4 1344.1,874.2 1348.4,874.1 C1352.7,874 1357,873.9 1361.2,874 C1365.5,874.1 1369.8,874.3 1373.9,874.6 C1378.1,874.8 1382.3,875.2 1386.4,875.7 C1390.4,876.2 1394.5,876.7 1398.4,877.4 C1402.3,878 1406.1,878.8 1409.8,879.6 C1413.5,880.4 1417,881.4 1420.5,882.4 C1423.9,883.4 1427.2,884.4 1430.3,885.6 C1433.5,886.7 1436.5,888 1439.3,889.3 C1442.1,890.6 1445.8,892.7 1447.1,893.4" fill="none" stroke="#00e5e5" stroke-width="1.3" />
<path d="M1387.3,919 C1387.3,919.3 1387.2,920 1387.1,920.5 C1387,921.1 1386.8,921.6 1386.5,922.1 C1386.2,922.6 1385.9,923.1 1385.5,923.6 C1385.1,924 1384.7,924.5 1384.1,925 C1383.6,925.5 1383,925.9 1382.4,926.4 C1381.8,926.8 1381.1,927.2 1380.3,927.6 C1379.6,928.1 1378.8,928.5 1377.9,928.8 C1377.1,929.2 1376.2,929.6 1375.2,929.9 C1374.3,930.2 1373.3,930.6 1372.3,930.9 C1371.2,931.2 1370.2,931.4 1369.1,931.7 C1368,931.9 1366.8,932.2 1365.7,932.4 C1364.5,932.6 1363.3,932.7 1362.1,932.9 C1360.9,933 1359.7,933.2 1358.5,933.2 C1357.3,933.3 1356,933.4 1354.8,933.5 C1353.5,933.5 1352.2,933.5 1351,933.5 C1349.7,933.5 1348.5,933.4 1347.2,933.4 C1346,933.3 1344.8,933.2 1343.5,933.1 C1342.3,933 1341.1,932.8 1339.9,932.6 C1338.8,932.5 1337.6,932.3 1336.5,932 C1335.3,931.8 1334.2,931.6 1333.2,931.3 C1332.1,931 1331.1,930.7 1330.1,930.4 C1329.1,930.1 1328.1,929.8 1327.2,929.4 C1326.3,929 1325.5,928.7 1324.7,928.3 C1323.9,927.9 1323.1,927.5 1322.4,927 C1321.7,926.6 1321.1,926.2 1320.5,925.7 C1319.9,925.3 1319.4,924.8 1319,924.3 C1318.5,923.8 1318.1,923.3 1317.8,922.8 C1317.4,922.3 1317.2,921.8 1317,921.3 C1316.8,920.8 1316.6,920.3 1316.6,919.8 C1316.5,919.3 1316.5,918.8 1316.5,918.3 C1316.6,917.7 1316.7,917.2 1316.9,916.7 C1317.1,916.2 1317.4,915.7 1317.7,915.2 C1318.1,914.7 1318.4,914.2 1318.9,913.8 C1319.4,913.3 1319.9,912.8 1320.4,912.3 C1321,911.9 1321.7,911.4 1322.4,911 C1323,910.6 1323.8,910.2 1324.6,909.8 C1325.4,909.4 1326.2,909 1327.1,908.6 C1328,908.3 1329,907.9 1330,907.6 C1330.9,907.3 1332,907 1333,906.7 C1334.1,906.5 1335.2,906.2 1336.3,906 C1337.5,905.8 1339.2,905.5 1339.8,905.4" fill="none" stroke="#6e6e6e" stroke-width="1" />
<path d="M1339.8,905.4 C1340.4,905.3 1342.2,905 1343.4,904.9 C1344.6,904.8 1345.9,904.7 1347.1,904.6 C1348.4,904.6 1349.6,904.5 1350.9,904.5 C1352.1,904.5 1353.4,904.5 1354.6,904.5 C1355.9,904.6 1357.1,904.7 1358.4,904.7 C1359.6,904.8 1360.8,905 1362.1,905.1 C1363.3,905.3 1364.4,905.4 1365.6,905.6 C1366.8,905.8 1367.9,906.1 1369,906.3 C1370.1,906.6 1371.2,906.8 1372.2,907.1 C1373.2,907.4 1374.2,907.7 1375.2,908.1 C1376.1,908.4 1377,908.8 1377.9,909.2 C1378.7,909.5 1379.5,909.9 1380.3,910.3 C1381,910.8 1381.7,911.2 1382.4,911.6 C1383,912.1 1383.6,912.5 1384.1,913 C1384.6,913.5 1385.1,914 1385.5,914.4 C1385.9,914.9 1386.2,915.4 1386.5,915.9 C1386.8,916.4 1387,916.9 1387.1,917.5 C1387.2,918 1387.3,918.7 1387.3,919" fill="none" stroke="#00e5e5" stroke-width="1.2" />
<path d="M1375.6,919.5 C1375.6,919.7 1375.6,920.2 1375.5,920.5 C1375.4,920.9 1375.2,921.2 1375.1,921.6 C1374.9,921.9 1374.6,922.3 1374.4,922.6 C1374.1,922.9 1373.8,923.2 1373.4,923.6 C1373.1,923.9 1372.7,924.2 1372.3,924.5 C1371.8,924.8 1371.3,925.1 1370.8,925.4 C1370.3,925.7 1369.8,925.9 1369.2,926.2 C1368.6,926.5 1368,926.7 1367.3,926.9 C1366.7,927.2 1366,927.4 1365.3,927.6 C1364.6,927.8 1363.9,928 1363.1,928.2 C1362.3,928.3 1361.6,928.5 1360.8,928.6 C1360,928.8 1359.2,928.9 1358.3,929 C1357.5,929.1 1356.6,929.2 1355.8,929.3 C1354.9,929.4 1354.1,929.4 1353.2,929.4 C1352.3,929.5 1351.5,929.5 1350.6,929.5 C1349.7,929.5 1348.9,929.5 1348,929.4 C1347.1,929.4 1346.3,929.4 1345.4,929.3 C1344.6,929.2 1343.7,929.1 1342.9,929 C1342,928.9 1341.2,928.8 1340.4,928.6 C1339.6,928.5 1338.9,928.3 1338.1,928.2 C1337.3,928 1336.6,927.8 1335.9,927.6 C1335.2,927.4 1334.5,927.2 1333.9,926.9 C1333.2,926.7 1332.6,926.5 1332,926.2 C1331.4,925.9 1330.9,925.7 1330.4,925.4 C1329.9,925.1 1329.4,924.8 1328.9,924.5 C1328.5,924.2 1328.1,923.9 1327.8,923.6 C1327.4,923.2 1327.1,922.9 1326.8,922.6 C1326.6,922.3 1326.3,921.9 1326.1,921.6 C1326,921.2 1325.8,920.9 1325.7,920.5 C1325.6,920.2 1325.6,919.8 1325.6,919.5 C1325.6,919.2 1325.6,918.8 1325.7,918.5 C1325.8,918.1 1326,917.8 1326.1,917.4 C1326.3,917.1 1326.6,916.7 1326.8,916.4 C1327.1,916.1 1327.4,915.8 1327.8,915.4 C1328.1,915.1 1328.5,914.8 1328.9,914.5 C1329.4,914.2 1329.9,913.9 1330.4,913.6 C1330.9,913.3 1331.4,913.1 1332,912.8 C1332.6,912.5 1333.2,912.3 1333.9,912.1 C1334.5,911.8 1335.2,911.6 1335.9,911.4 C1336.6,911.2 1337.3,911 1338.1,910.8 C1338.9,910.7 1339.6,910.5 1340.4,910.4 C1341.2,910.2 1342,910.1 1342.9,910 C1343.7,909.9 1344.6,909.8 1345.4,909.7 C1346.3,909.6 1347.1,909.6 1348,909.6 C1348.9,909.5 1349.7,909.5 1350.6,909.5 C1351.5,909.5 1352.3,909.5 1353.2,909.6 C1354.1,909.6 1354.9,909.6 1355.8,909.7 C1356.6,909.8 1357.5,909.9 1358.3,910 C1359.2,910.1 1360,910.2 1360.8,910.4 C1361.6,910.5 1362.3,910.7 1363.1,910.8 C1363.9,911 1364.6,911.2 1365.3,911.4 C1366,911.6 1366.7,911.8 1367.3,912.1 C1368,912.3 1368.6,912.5 1369.2,912.8 C1369.8,913.1 1370.3,913.3 1370.8,913.6 C1371.3,913.9 1371.8,914.2 1372.3,914.5 C1372.7,914.8 1373.1,915.1 1373.4,915.4 C1373.8,915.8 1374.1,916.1 1374.4,916.4 C1374.6,916.7 1374.9,917.1 1375.1,917.4 C1375.2,917.8 1375.4,918.1 1375.5,918.5 C1375.6,918.8 1375.6,919.3 1375.6,919.5" fill="none" stroke="#6e6e6e" stroke-width="1" />
<path d="M1365.3,919 C1365.3,919.1 1365.3,919.5 1365.2,919.7 C1365.2,920 1365.1,920.2 1364.9,920.5 C1364.8,920.7 1364.7,920.9 1364.5,921.2 C1364.3,921.4 1364.1,921.6 1363.9,921.8 C1363.7,922.1 1363.4,922.3 1363.1,922.5 C1362.8,922.7 1362.5,922.9 1362.2,923.1 C1361.9,923.3 1361.5,923.5 1361.1,923.7 C1360.7,923.9 1360.3,924 1359.9,924.2 C1359.5,924.4 1359,924.5 1358.6,924.7 C1358.1,924.8 1357.6,924.9 1357.2,925.1 C1356.7,925.2 1356.1,925.3 1355.6,925.4 C1355.1,925.5 1354.6,925.6 1354,925.7 C1353.5,925.7 1352.9,925.8 1352.4,925.8 C1351.8,925.9 1351.3,925.9 1350.7,926 C1350.1,926 1349.6,926 1349,926 C1348.4,926 1347.9,926 1347.3,926 C1346.7,925.9 1346.2,925.9 1345.6,925.8 C1345.1,925.8 1344.5,925.7 1344,925.7 C1343.4,925.6 1342.9,925.5 1342.4,925.4 C1341.9,925.3 1341.3,925.2 1340.8,925.1 C1340.4,924.9 1339.9,924.8 1339.4,924.7 C1339,924.5 1338.5,924.4 1338.1,924.2 C1337.7,924 1337.3,923.9 1336.9,923.7 C1336.5,923.5 1336.1,923.3 1335.8,923.1 C1335.5,922.9 1335.2,922.7 1334.9,922.5 C1334.6,922.3 1334.3,922.1 1334.1,921.8 C1333.9,921.6 1333.7,921.4 1333.5,921.2 C1333.3,920.9 1333.2,920.7 1333.1,920.5 C1332.9,920.2 1332.8,920 1332.8,919.7 C1332.7,919.5 1332.7,919.1 1332.7,919" fill="none" stroke="#6e6e6e" stroke-width="1" />
<path d="M1332.7,919 C1332.7,918.9 1332.7,918.5 1332.8,918.3 C1332.8,918 1332.9,917.8 1333.1,917.5 C1333.2,917.3 1333.3,917.1 1333.5,916.8 C1333.7,916.6 1333.9,916.4 1334.1,916.2 C1334.3,915.9 1334.6,915.7 1334.9,915.5 C1335.2,915.3 1335.5,915.1 1335.8,914.9 C1336.1,914.7 1336.5,914.5 1336.9,914.3 C1337.3,914.1 1337.7,914 1338.1,913.8 C1338.5,913.6 1339,913.5 1339.4,913.3 C1339.9,913.2 1340.4,913.1 1340.8,912.9 C1341.3,912.8 1341.9,912.7 1342.4,912.6 C1342.9,912.5 1343.4,912.4 1344,912.3 C1344.5,912.3 1345.1,912.2 1345.6,912.2 C1346.2,912.1 1346.7,912.1 1347.3,912 C1347.9,912 1348.4,912 1349,912 C1349.6,912 1350.1,912 1350.7,912 C1351.3,912.1 1351.8,912.1 1352.4,912.2 C1352.9,912.2 1353.5,912.3 1354,912.3 C1354.6,912.4 1355.1,912.5 1355.6,912.6 C1356.1,912.7 1356.7,912.8 1357.2,912.9 C1357.6,913.1 1358.1,913.2 1358.6,913.3 C1359,913.5 1359.5,913.6 1359.9,913.8 C1360.3,914 1360.7,914.1 1361.1,914.3 C1361.5,914.5 1361.9,914.7 1362.2,914.9 C1362.5,915.1 1362.8,915.3 1363.1,915.5 C1363.4,915.7 1363.7,915.9 1363.9,916.2 C1364.1,916.4 1364.3,916.6 1364.5,916.8 C1364.7,917.1 1364.8,917.3 1364.9,917.5 C1365.1,917.8 1365.2,918 1365.2,918.3 C1365.3,918.5 1365.3,918.9 1365.3,919" fill="none" stroke="#00e5e5" stroke-width="1.2" />
<path d="M1357.5,919 C1357.5,919.1 1357.5,919.3 1357.5,919.4 C1357.4,919.6 1357.4,919.7 1357.3,919.8 C1357.2,920 1357.2,920.1 1357.1,920.2 C1357,920.4 1356.8,920.5 1356.7,920.6 C1356.6,920.8 1356.5,920.9 1356.3,921 C1356.1,921.1 1356,921.2 1355.8,921.4 C1355.6,921.5 1355.4,921.6 1355.2,921.7 C1355,921.8 1354.8,921.9 1354.5,922 C1354.3,922.1 1354,922.2 1353.8,922.2 C1353.5,922.3 1353.3,922.4 1353,922.5 C1352.7,922.5 1352.4,922.6 1352.2,922.7 C1351.9,922.7 1351.6,922.8 1351.3,922.8 C1351,922.8 1350.7,922.9 1350.4,922.9 C1350.1,922.9 1349.8,923 1349.4,923 C1349.1,923 1348.8,923 1348.5,923 C1348.2,923 1347.9,923 1347.6,923 C1347.2,923 1346.9,922.9 1346.6,922.9 C1346.3,922.9 1346,922.8 1345.7,922.8 C1345.4,922.8 1345.1,922.7 1344.8,922.7 C1344.6,922.6 1344.3,922.5 1344,922.5 C1343.7,922.4 1343.5,922.3 1343.2,922.2 C1343,922.2 1342.7,922.1 1342.5,922 C1342.2,921.9 1342,921.8 1341.8,921.7 C1341.6,921.6 1341.4,921.5 1341.2,921.4 C1341,921.2 1340.9,921.1 1340.7,921 C1340.5,920.9 1340.4,920.8 1340.3,920.6 C1340.2,920.5 1340,920.4 1339.9,920.2 C1339.8,920.1 1339.8,920 1339.7,919.8 C1339.6,919.7 1339.6,919.6 1339.5,919.4 C1339.5,919.3 1339.5,919.1 1339.5,919 C1339.5,918.9 1339.5,918.7 1339.5,918.6 C1339.6,918.4 1339.6,918.3 1339.7,918.2 C1339.8,918 1339.8,917.9 1339.9,917.8 C1340,917.6 1340.2,917.5 1340.3,917.4 C1340.4,917.2 1340.5,917.1 1340.7,917 C1340.9,916.9 1341,916.8 1341.2,916.6 C1341.4,916.5 1341.6,916.4 1341.8,916.3 C1342,916.2 1342.2,916.1 1342.5,916 C1342.7,915.9 1343,915.8 1343.2,915.8 C1343.5,915.7 1343.7,915.6 1344,915.5 C1344.3,915.5 1344.6,915.4 1344.8,915.3 C1345.1,915.3 1345.4,915.2 1345.7,915.2 C1346,915.2 1346.3,915.1 1346.6,915.1 C1346.9,915.1 1347.2,915 1347.6,915 C1347.9,915 1348.2,915 1348.5,915 C1348.8,915 1349.1,915 1349.4,915 C1349.8,915 1350.1,915.1 1350.4,915.1 C1350.7,915.1 1351,915.2 1351.3,915.2 C1351.6,915.2 1351.9,915.3 1352.2,915.3 C1352.4,915.4 1352.7,915.5 1353,915.5 C1353.3,915.6 1353.5,915.7 1353.8,915.8 C1354,915.8 1354.3,915.9 1354.5,916 C1354.8,916.1 1355,916.2 1355.2,916.3 C1355.4,916.4 1355.6,916.5 1355.8,916.6 C1356,916.8 1356.1,916.9 1356.3,917 C1356.5,917.1 1356.6,917.2 1356.7,917.4 C1356.8,917.5 1357,917.6 1357.1,917.8 C1357.2,917.9 1357.2,918 1357.3,918.2 C1357.4,918.3 1357.4,918.4 1357.5,918.6 C1357.5,918.7 1357.5,918.9 1357.5,919" fill="none" stroke="#6e6e6e" stroke-width="1" />
<g transform="translate(1300.6,845.4) rotate(-36.5)"><clipPath id="sf1"><rect x="-37" y="0" width="74" height="7.6"/></clipPath><clipPath id="sb1"><circle r="14.5"/></clipPath><path d="M-35,0 A35,5.6 0 1 0 35,0 A35,5.6 0 1 0 -35,0 Z M-21,0 A21,2.9 0 1 1 21,0 A21,2.9 0 1 1 -21,0 Z" fill="#8a6848" fill-rule="evenodd"/><circle r="14.5" fill="url(#gSat)"/><g clip-path="url(#sb1)"><rect x="-14.5" y="-10.4" width="29" height="2.9" fill="#b88a58" opacity="0.5"/><rect x="-14.5" y="-5.5" width="29" height="2.3" fill="#e8b868" opacity="0.5"/><rect x="-14.5" y="-1.3" width="29" height="2" fill="#b88848" opacity="0.55"/><rect x="-14.5" y="1.5" width="29" height="13.1" fill="#b08868" opacity="0.45"/><path d="M-21,0 A21,2.9 0 0 0 21,0" fill="none" stroke="#2a1a0a" stroke-width="0.9" opacity="0.8"/></g><circle r="14.5" fill="url(#gShade)"/><g clip-path="url(#sf1)"><path d="M-35,0 A35,5.6 0 1 0 35,0 A35,5.6 0 1 0 -35,0 Z M-21,0 A21,2.9 0 1 1 21,0 A21,2.9 0 1 1 -21,0 Z" fill="#8a6848" fill-rule="evenodd"/></g></g>
<path d="M1014.1,725.7 C1016.4,726.1 1023.3,727.4 1027.9,728.3 C1032.5,729.2 1037,730.1 1041.6,731.1 C1046.2,732 1050.8,733 1055.3,734 C1059.9,734.9 1064.5,736 1069,737 C1073.6,738 1078.1,739.1 1082.7,740.2 C1087.2,741.3 1091.8,742.4 1096.3,743.5 C1100.8,744.7 1105.4,745.9 1109.9,747.1 C1114.4,748.3 1118.9,749.5 1123.4,750.8 C1127.9,752 1132.4,753.3 1136.9,754.6 C1141.4,756 1145.8,757.3 1150.3,758.7 C1154.8,760.1 1159.2,761.5 1163.7,763 C1168.1,764.4 1172.5,765.9 1177,767.4 C1181.4,768.9 1185.8,770.5 1190.1,772.1 C1194.5,773.7 1198.9,775.3 1203.3,777 C1207.6,778.7 1212,780.4 1216.3,782.2 C1220.6,784 1224.9,785.8 1229.2,787.6 C1233.5,789.5 1237.8,791.4 1242,793.4 C1246.3,795.3 1250.5,797.3 1254.7,799.4 C1258.9,801.5 1263,803.6 1267.1,805.8 C1271.3,807.9 1275.4,810.2 1279.4,812.5 C1283.5,814.8 1287.5,817.2 1291.5,819.7 C1295.5,822.1 1299.4,824.7 1303.3,827.3 C1307.1,829.9 1311,832.6 1314.7,835.4 C1318.4,838.2 1322.1,841.1 1325.7,844.1 C1329.3,847.1 1332.8,850.2 1336.1,853.4 C1339.5,856.7 1342.9,860.2 1345.9,863.5 C1348.9,866.8 1351.6,870.2 1354,873.3 C1356.3,876.5 1358.2,879.4 1360,882.2 C1361.7,885 1363.1,887.6 1364.4,890.1 C1365.7,892.7 1366.8,895.1 1367.8,897.5 C1368.7,899.9 1369.5,902.2 1370.2,904.4 C1370.8,906.6 1371.4,908.8 1371.8,910.9 C1372.3,913.1 1372.6,915.2 1372.8,917.2 C1373.1,919.3 1373.2,921.3 1373.3,923.3 C1373.3,925.4 1373.2,928.1 1373.2,929.4 C1373.2,930.6 1373.1,930.8 1373.1,931" fill="none" stroke="#00eded" stroke-width="3.2" />
<path d="M1373.1,931 C1373,932 1372.7,935.1 1372.3,937.1 C1372,939.1 1371.5,941.1 1371,943.2 C1370.4,945.2 1369.8,947.3 1369,949.4 C1368.3,951.6 1367.4,953.7 1366.4,956 C1365.3,958.2 1364.2,960.5 1362.8,962.8 C1361.4,965.2 1360,967.6 1358.2,970.2 C1356.4,972.7 1354.4,975.3 1352.1,978.1 C1349.8,980.9 1347.2,983.8 1344.2,986.8 C1341.1,989.9 1337.4,993.3 1333.9,996.3 C1330.3,999.4 1326.6,1002.2 1322.8,1005 C1319.1,1007.8 1315.2,1010.4 1311.3,1012.9 C1307.4,1015.5 1303.4,1017.9 1299.3,1020.2 C1295.3,1022.6 1291.2,1024.8 1287.1,1027 C1282.9,1029.1 1278.7,1031.2 1274.5,1033.2 C1270.3,1035.2 1266,1037.1 1261.8,1039 C1257.5,1040.9 1253.2,1042.6 1248.8,1044.4 C1244.5,1046.1 1240.1,1047.8 1235.7,1049.4 C1231.3,1051 1226.9,1052.6 1222.5,1054.1 C1218.1,1055.6 1213.7,1057.1 1209.2,1058.5 C1204.7,1059.9 1200.3,1061.3 1195.8,1062.6 C1191.3,1063.9 1186.8,1065.2 1182.3,1066.4 C1177.8,1067.6 1173.3,1068.8 1168.8,1070 C1164.2,1071.2 1159.7,1072.3 1155.2,1073.3 C1150.6,1074.4 1146.1,1075.5 1141.5,1076.5 C1137,1077.5 1132.4,1078.5 1127.8,1079.4 C1123.2,1080.4 1118.7,1081.3 1114.1,1082.1 C1109.5,1083 1104.9,1083.9 1100.3,1084.7 C1095.7,1085.5 1091.1,1086.3 1086.5,1087.1 C1081.9,1087.8 1075,1088.9 1072.6,1089.2 C1070.3,1089.6 1072.3,1089.3 1072.2,1089.3" fill="none" stroke="#0000f6" stroke-width="3.1" />
</g>
<g transform="translate(788.8,190.9)"><clipPath id="pc2"><circle r="8.9"/></clipPath><circle r="8.9" fill="url(#gMars)"/><g clip-path="url(#pc2)"><ellipse cx="1.3" cy="4" rx="3.1" ry="2.5" transform="rotate(20 1.3 4)" fill="#3a3a50" opacity="0.75"/><ellipse cx="-1.8" cy="7.6" rx="5.3" ry="2.2" transform="rotate(0 -1.8 7.6)" fill="#4a6a90" opacity="0.7"/><ellipse cx="6.7" cy="0.9" rx="2.2" ry="5.3" transform="rotate(0 6.7 0.9)" fill="#4a6a90" opacity="0.55"/><ellipse cx="-2.7" cy="-1.8" rx="4.5" ry="3.6" transform="rotate(0 -2.7 -1.8)" fill="#f08868" opacity="0.6"/></g><circle r="8.9" fill="url(#gShade)"/></g>
<g transform="translate(812.1,279.7)"><clipPath id="pc3"><circle r="9.8"/></clipPath><circle r="9.8" fill="url(#gVen)"/><g clip-path="url(#pc3)"><ellipse cx="-2" cy="-2" rx="5.9" ry="4.9" transform="rotate(0 -2 -2)" fill="#d8cca0" opacity="0.6"/><ellipse cx="2.9" cy="4.9" rx="4.9" ry="2.9" transform="rotate(-20 2.9 4.9)" fill="#a89870" opacity="0.5"/></g><circle r="9.8" fill="url(#gShade)"/></g>
<g transform="translate(779,305)"><clipPath id="pc4"><circle r="9.2"/></clipPath><circle r="9.2" fill="url(#gMerc)"/><g clip-path="url(#pc4)"><ellipse cx="0.9" cy="-3.2" rx="4.1" ry="2.8" transform="rotate(10 0.9 -3.2)" fill="#4a2410" opacity="0.7"/><ellipse cx="-4.1" cy="0.9" rx="2.8" ry="3.2" transform="rotate(0 -4.1 0.9)" fill="#f0b880" opacity="0.7"/><ellipse cx="3.2" cy="3.2" rx="3.2" ry="2.8" transform="rotate(0 3.2 3.2)" fill="#e8a868" opacity="0.6"/><ellipse cx="-0.9" cy="5.5" rx="3.7" ry="1.8" transform="rotate(0 -0.9 5.5)" fill="#6a3418" opacity="0.6"/><ellipse cx="5.1" cy="-0.9" rx="1.8" ry="2.3" transform="rotate(0 5.1 -0.9)" fill="#f0c090" opacity="0.6"/></g><circle r="9.2" fill="url(#gShade)"/></g>
<g transform="translate(609.7,353.1)"><clipPath id="pc5"><circle r="9.7"/></clipPath><circle r="9.7" fill="url(#gComet)"/><g clip-path="url(#pc5)"><ellipse cx="0.5" cy="1.2" rx="1.6" ry="2.1" transform="rotate(-30 0.5 1.2)" fill="#1010e0" opacity="0.95"/><ellipse cx="-2.9" cy="-0.5" rx="2.9" ry="2.4" transform="rotate(0 -2.9 -0.5)" fill="#00e8f0" opacity="0.6"/></g><circle r="9.7" fill="url(#gShade)"/></g>
<circle cx="761.3" cy="344.5" r="9" fill="url(#gSun)"/>
<circle cx="238.1" cy="780.7" r="9.3" fill="url(#gNep)"/>
<circle cx="520.9" cy="754.3" r="9.5" fill="url(#gUra)"/>
<g transform="translate(210.3,978.4)"><clipPath id="pc9"><circle r="9.3"/></clipPath><circle r="9.3" fill="url(#gJup)"/><g clip-path="url(#pc9)"><rect x="-12.1" y="-6.1" width="24.2" height="2" transform="rotate(-20)" fill="#9c9c8c" opacity="0.4"/><rect x="-12.1" y="-2.9" width="24.2" height="2" transform="rotate(-20)" fill="#d0d0d8" opacity="0.55"/><rect x="-12.1" y="0.2" width="24.2" height="1.5" transform="rotate(-20)" fill="#a4a48c" opacity="0.5"/><rect x="-12.1" y="2.3" width="24.2" height="1.5" transform="rotate(-20)" fill="#c4c4c4" opacity="0.4"/><rect x="-12.1" y="4.5" width="24.2" height="1.9" transform="rotate(-20)" fill="#a0a090" opacity="0.4"/></g><circle r="9.3" fill="url(#gShade)"/></g>
<g transform="translate(752,1001.5) rotate(-35.4)"><clipPath id="sf2"><rect x="-25.6" y="0" width="51.2" height="6.4"/></clipPath><clipPath id="sb2"><circle r="9.5"/></clipPath><path d="M-23.6,0 A23.6,4.4 0 1 0 23.6,0 A23.6,4.4 0 1 0 -23.6,0 Z M-14.2,0 A14.2,2.3 0 1 1 14.2,0 A14.2,2.3 0 1 1 -14.2,0 Z" fill="#8a6848" fill-rule="evenodd"/><circle r="9.5" fill="url(#gSat)"/><g clip-path="url(#sb2)"><rect x="-9.5" y="-6.8" width="19" height="1.9" fill="#b88a58" opacity="0.5"/><rect x="-9.5" y="-3.6" width="19" height="1.5" fill="#e8b868" opacity="0.5"/><rect x="-9.5" y="-0.9" width="19" height="1.3" fill="#b88848" opacity="0.55"/><rect x="-9.5" y="1" width="19" height="8.6" fill="#b08868" opacity="0.45"/><path d="M-14.2,0 A14.2,2.3 0 0 0 14.2,0" fill="none" stroke="#2a1a0a" stroke-width="0.6" opacity="0.8"/></g><circle r="9.5" fill="url(#gShade)"/><g clip-path="url(#sf2)"><path d="M-23.6,0 A23.6,4.4 0 1 0 23.6,0 A23.6,4.4 0 1 0 -23.6,0 Z M-14.2,0 A14.2,2.3 0 1 1 14.2,0 A14.2,2.3 0 1 1 -14.2,0 Z" fill="#8a6848" fill-rule="evenodd"/></g></g>
<g transform="translate(363.1,902.7)"><clipPath id="pc10"><circle r="8.5"/></clipPath><circle r="8.5" fill="url(#gMars)"/><g clip-path="url(#pc10)"><ellipse cx="1.3" cy="3.8" rx="3" ry="2.4" transform="rotate(20 1.3 3.8)" fill="#3a3a50" opacity="0.75"/><ellipse cx="-1.7" cy="7.2" rx="5.1" ry="2.1" transform="rotate(0 -1.7 7.2)" fill="#4a6a90" opacity="0.7"/><ellipse cx="6.4" cy="0.9" rx="2.1" ry="5.1" transform="rotate(0 6.4 0.9)" fill="#4a6a90" opacity="0.55"/><ellipse cx="-2.5" cy="-1.7" rx="4.2" ry="3.4" transform="rotate(0 -2.5 -1.7)" fill="#f08868" opacity="0.6"/></g><circle r="8.5" fill="url(#gShade)"/></g>
<g transform="translate(373.5,913.1)"><clipPath id="pc11"><circle r="9"/></clipPath><circle r="9" fill="url(#gVen)"/><g clip-path="url(#pc11)"><ellipse cx="-1.8" cy="-1.8" rx="5.4" ry="4.5" transform="rotate(0 -1.8 -1.8)" fill="#d8cca0" opacity="0.6"/><ellipse cx="2.7" cy="4.5" rx="4.5" ry="2.7" transform="rotate(-20 2.7 4.5)" fill="#a89870" opacity="0.5"/></g><circle r="9" fill="url(#gShade)"/></g>
<g transform="translate(363,915.4)"><clipPath id="pc12"><circle r="8"/></clipPath><circle r="8" fill="url(#gMerc)"/><g clip-path="url(#pc12)"><ellipse cx="0.8" cy="-2.8" rx="3.6" ry="2.4" transform="rotate(10 0.8 -2.8)" fill="#4a2410" opacity="0.7"/><ellipse cx="-3.6" cy="0.8" rx="2.4" ry="2.8" transform="rotate(0 -3.6 0.8)" fill="#f0b880" opacity="0.7"/><ellipse cx="2.8" cy="2.8" rx="2.8" ry="2.4" transform="rotate(0 2.8 2.8)" fill="#e8a868" opacity="0.6"/><ellipse cx="-0.8" cy="4.8" rx="3.2" ry="1.6" transform="rotate(0 -0.8 4.8)" fill="#6a3418" opacity="0.6"/><ellipse cx="4.4" cy="-0.8" rx="1.6" ry="2" transform="rotate(0 4.4 -0.8)" fill="#f0c090" opacity="0.6"/></g><circle r="8" fill="url(#gShade)"/></g>
<circle cx="358" cy="919.5" r="8.8" fill="url(#gSun)"/>
<g transform="translate(311.2,931.1)"><clipPath id="pc14"><circle r="9"/></clipPath><circle r="9" fill="url(#gComet)"/><g clip-path="url(#pc14)"><ellipse cx="0.5" cy="1.1" rx="1.4" ry="2" transform="rotate(-30 0.5 1.1)" fill="#1010e0" opacity="0.95"/><ellipse cx="-2.7" cy="-0.5" rx="2.7" ry="2.2" transform="rotate(0 -2.7 -0.5)" fill="#00e8f0" opacity="0.6"/></g><circle r="9" fill="url(#gShade)"/></g>
<g transform="translate(325.2,923.3)"><clipPath id="pc15"><circle r="9.3"/></clipPath><circle r="9.3" fill="url(#gEarth)"/><g clip-path="url(#pc15)"><ellipse cx="-2.8" cy="-2.8" rx="4.2" ry="2.8" transform="rotate(-20 -2.8 -2.8)" fill="#f4f4ff" opacity="0.8"/><ellipse cx="3.3" cy="0.9" rx="3.7" ry="2.3" transform="rotate(30 3.3 0.9)" fill="#f0f0ff" opacity="0.75"/><ellipse cx="-0.9" cy="4.7" rx="4.7" ry="2.3" transform="rotate(10 -0.9 4.7)" fill="#e8e8f8" opacity="0.7"/><ellipse cx="0.9" cy="-0.5" rx="2.3" ry="1.9" transform="rotate(0 0.9 -0.5)" fill="#8a5a3a" opacity="0.6"/><ellipse cx="-4.7" cy="1.9" rx="1.9" ry="2.8" transform="rotate(0 -4.7 1.9)" fill="#2a3a8a" opacity="0.6"/><ellipse cx="4.7" cy="-4.2" rx="2.3" ry="1.9" transform="rotate(0 4.7 -4.2)" fill="#2a3a8a" opacity="0.6"/></g><circle r="9.3" fill="url(#gShade)"/></g>
<g transform="translate(1468.6,913.8)" opacity="0.93"><clipPath id="pc16"><circle r="27.3"/></clipPath><circle r="27.3" fill="url(#gJup)"/><g clip-path="url(#pc16)"><rect x="-35.5" y="-18" width="71" height="6" transform="rotate(-20)" fill="#9c9c8c" opacity="0.4"/><rect x="-35.5" y="-8.5" width="71" height="6" transform="rotate(-20)" fill="#d0d0d8" opacity="0.55"/><rect x="-35.5" y="0.5" width="71" height="4.4" transform="rotate(-20)" fill="#a4a48c" opacity="0.5"/><rect x="-35.5" y="6.8" width="71" height="4.4" transform="rotate(-20)" fill="#c4c4c4" opacity="0.4"/><rect x="-35.5" y="13.1" width="71" height="5.5" transform="rotate(-20)" fill="#a0a090" opacity="0.4"/></g><circle r="27.3" fill="url(#gShade)"/></g>
<circle cx="1347.8" cy="919" r="6.7" fill="url(#gSun)"/>
<circle cx="1331.7" cy="920.5" r="2" fill="url(#gVen)"/>
<circle cx="1322.6" cy="928.1" r="1.3" fill="url(#gMars)"/>
<circle cx="1368.1" cy="923.2" r="2.4" fill="url(#gEarth)"/>
<circle cx="1372.1" cy="930.8" r="3" fill="url(#gComet)"/>
<path d="M1466.8,913.7 C1466.9,914.2 1467.4,915.8 1467.7,916.8 C1467.9,917.9 1468,918.9 1468.1,919.9 C1468.1,921 1468.1,922 1468,923.1 C1467.9,924.1 1467.8,925.2 1467.5,926.2 C1467.2,927.3 1466.9,928.3 1466.5,929.4 C1466.1,930.4 1465.6,931.5 1465,932.5 C1464.5,933.5 1463.8,934.5 1463.1,935.6 C1462.4,936.6 1461.1,938.1 1460.7,938.6" fill="none" stroke="#00e5e5" stroke-width="1.3" />
<clipPath id="cj"><circle cx="1468.6" cy="913.8" r="27.3"/></clipPath><g clip-path="url(#cj)" opacity="0.85">
<text x="1374.3" y="934.8" textLength="210.5" lengthAdjust="spacingAndGlyphs" font-family="'DejaVu Sans', Verdana, sans-serif" font-size="19.8" fill="#ff0000">C/2014 Q2 (Lovejoy)</text>
</g>
<g stroke="#4a4a4a" stroke-width="0.9" fill="none"><path d="M514.5,754.2 L524.5,754.6"/><path d="M358.3,920 L358.3,929.2" stroke="#222"/><path d="M812,280 L819.5,286.5"/><path d="M770.5,304.3 L779,305"/><path d="M1452,927.5 L1476.5,915.5" stroke="#555"/></g>
<text font-family="'Liberation Sans', Arial, sans-serif" font-size="26.6" fill="#ffffff"><tspan x="252" y="589" textLength="62.5" lengthAdjust="spacingAndGlyphs">http:</tspan><tspan x="313.7" y="592.4" textLength="17.1" lengthAdjust="spacingAndGlyphs" font-family="'DejaVu Sans', sans-serif" font-weight="200" font-size="32.8" stroke="#fff" stroke-width="0.15">/</tspan><tspan x="325.6" y="592.4" textLength="17.3" lengthAdjust="spacingAndGlyphs" font-family="'DejaVu Sans', sans-serif" font-weight="200" font-size="32.8" stroke="#fff" stroke-width="0.15">/</tspan><tspan x="340.5" y="589" textLength="73" lengthAdjust="spacingAndGlyphs">www.</tspan><tspan x="413.7" y="589" textLength="116.3" lengthAdjust="spacingAndGlyphs">astrosurf</tspan><tspan x="528.5" y="589" textLength="60" lengthAdjust="spacingAndGlyphs">.com</tspan><tspan x="588.2" y="592.4" textLength="17.3" lengthAdjust="spacingAndGlyphs" font-family="'DejaVu Sans', sans-serif" font-weight="200" font-size="32.8" stroke="#fff" stroke-width="0.15">/</tspan><tspan x="604.7" y="589" textLength="97.5" lengthAdjust="spacingAndGlyphs">spheres</tspan><tspan x="701.4" y="592.4" textLength="17.8" lengthAdjust="spacingAndGlyphs" font-family="'DejaVu Sans', sans-serif" font-weight="200" font-size="32.8" stroke="#fff" stroke-width="0.15">/</tspan><tspan x="718.5" y="589" textLength="75" lengthAdjust="spacingAndGlyphs">kepler</tspan><tspan x="792.6" y="592.4" textLength="17.8" lengthAdjust="spacingAndGlyphs" font-family="'DejaVu Sans', sans-serif" font-weight="200" font-size="32.8" stroke="#fff" stroke-width="0.15">/</tspan><tspan x="810.4" y="589" textLength="169" lengthAdjust="spacingAndGlyphs">keplerlovejoy</tspan><tspan x="979" y="589" textLength="61" lengthAdjust="spacingAndGlyphs">.htm</tspan></text>
</svg>
<div class="info"></div>
<div class="t" style="left:22.2px;top:35.59px;font-family:'DejaVu Sans',Verdana,sans-serif;font-size:22px;line-height:22px;color:#66ff00;letter-spacing:0.1px;">02-01-2015</div>
<div class="t" style="left:26.6px;top:56.35px;font-family:'Liberation Serif','Times New Roman',serif;font-size:20px;line-height:20px;color:#fff;text-shadow:0 0 1px #fff;">Profil :</div>
<div class="sel" style="left:88px;top:56px;width:155px;height:24px;"><span style="left:4.3px;">Selected Comet</span><i style="left:141px"></i></div>
<div class="t" style="left:36.6px;top:105.85px;font-family:'Liberation Serif','Times New Roman',serif;font-size:20px;line-height:20px;color:#fff;text-shadow:0 0 1px #fff;">Comet selected:</div>
<div class="sel" style="left:170px;top:104.5px;width:194px;height:24px;"><span style="left:4.5px;">C/2014 Q2 (Lovejoy)</span><i style="left:180px"></i></div>
<div class="t" style="left:42.5px;top:178.10px;font-family:'Liberation Serif','Times New Roman',serif;font-size:16px;line-height:16px;color:#fff;text-shadow:0 0 1px #fff;">Inclination</div>
<div class="t" style="left:169.5px;top:177.96px;font-family:'Liberation Sans',Arial,sans-serif;font-size:16px;line-height:16px;color:#fff;">80.30</div>
<div class="t" style="left:42.5px;top:202.00px;font-family:'Liberation Serif','Times New Roman',serif;font-size:16px;line-height:16px;color:#fff;text-shadow:0 0 1px #fff;">Eccentricity</div>
<div class="t" style="left:164.6px;top:201.86px;font-family:'Liberation Sans',Arial,sans-serif;font-size:16px;line-height:16px;color:#fff;">0.997802</div>
<div class="t" style="left:42.5px;top:225.90px;font-family:'Liberation Serif','Times New Roman',serif;font-size:16px;line-height:16px;color:#fff;text-shadow:0 0 1px #fff;">Orbital Period [yr]</div>
<div class="t" style="left:237px;top:225.76px;font-family:'Liberation Sans',Arial,sans-serif;font-size:16px;line-height:16px;color:#fff;">-</div>
<div class="t" style="left:42.5px;top:249.80px;font-family:'Liberation Serif','Times New Roman',serif;font-size:16px;line-height:16px;color:#fff;text-shadow:0 0 1px #fff;">Speed [km/sec]</div>
<div class="t" style="left:200.8px;top:249.66px;font-family:'Liberation Sans',Arial,sans-serif;font-size:16px;line-height:16px;color:#fff;">36.15</div>
<div class="t" style="left:42.5px;top:273.70px;font-family:'Liberation Serif','Times New Roman',serif;font-size:16px;line-height:16px;color:#fff;text-shadow:0 0 1px #fff;">Distance from Earth</div>
<div class="t" style="left:216.5px;top:273.56px;font-family:'Liberation Sans',Arial,sans-serif;font-size:16px;line-height:16px;color:#fff;">0.49 [UA]</div>
<div class="t" style="left:42.5px;top:297.60px;font-family:'Liberation Serif','Times New Roman',serif;font-size:16px;line-height:16px;color:#fff;text-shadow:0 0 1px #fff;">Distance from Mars</div>
<div class="t" style="left:214.5px;top:297.46px;font-family:'Liberation Sans',Arial,sans-serif;font-size:16px;line-height:16px;color:#fff;">2.14 [UA]</div>
<div class="t" style="left:42.5px;top:321.50px;font-family:'Liberation Serif','Times New Roman',serif;font-size:16px;line-height:16px;color:#fff;text-shadow:0 0 1px #fff;">Distance from Sun</div>
<div class="t" style="left:207.9px;top:321.36px;font-family:'Liberation Sans',Arial,sans-serif;font-size:16px;line-height:16px;color:#fff;">1.36 [UA]</div>
<div class="t" style="left:42.8px;top:345.90px;font-family:'Liberation Serif','Times New Roman',serif;font-size:16px;line-height:16px;color:#fff;text-shadow:0 0 1px #fff;">[AU] Astronomic Unit = 149'598'000 km</div>
<div class="t" style="left:42.8px;top:365.80px;font-family:'Liberation Serif','Times New Roman',serif;font-size:16px;line-height:16px;color:#fff;text-shadow:0 0 1px #fff;">[LD] Lunar Distance = 384'400 km</div>
</body></html>
